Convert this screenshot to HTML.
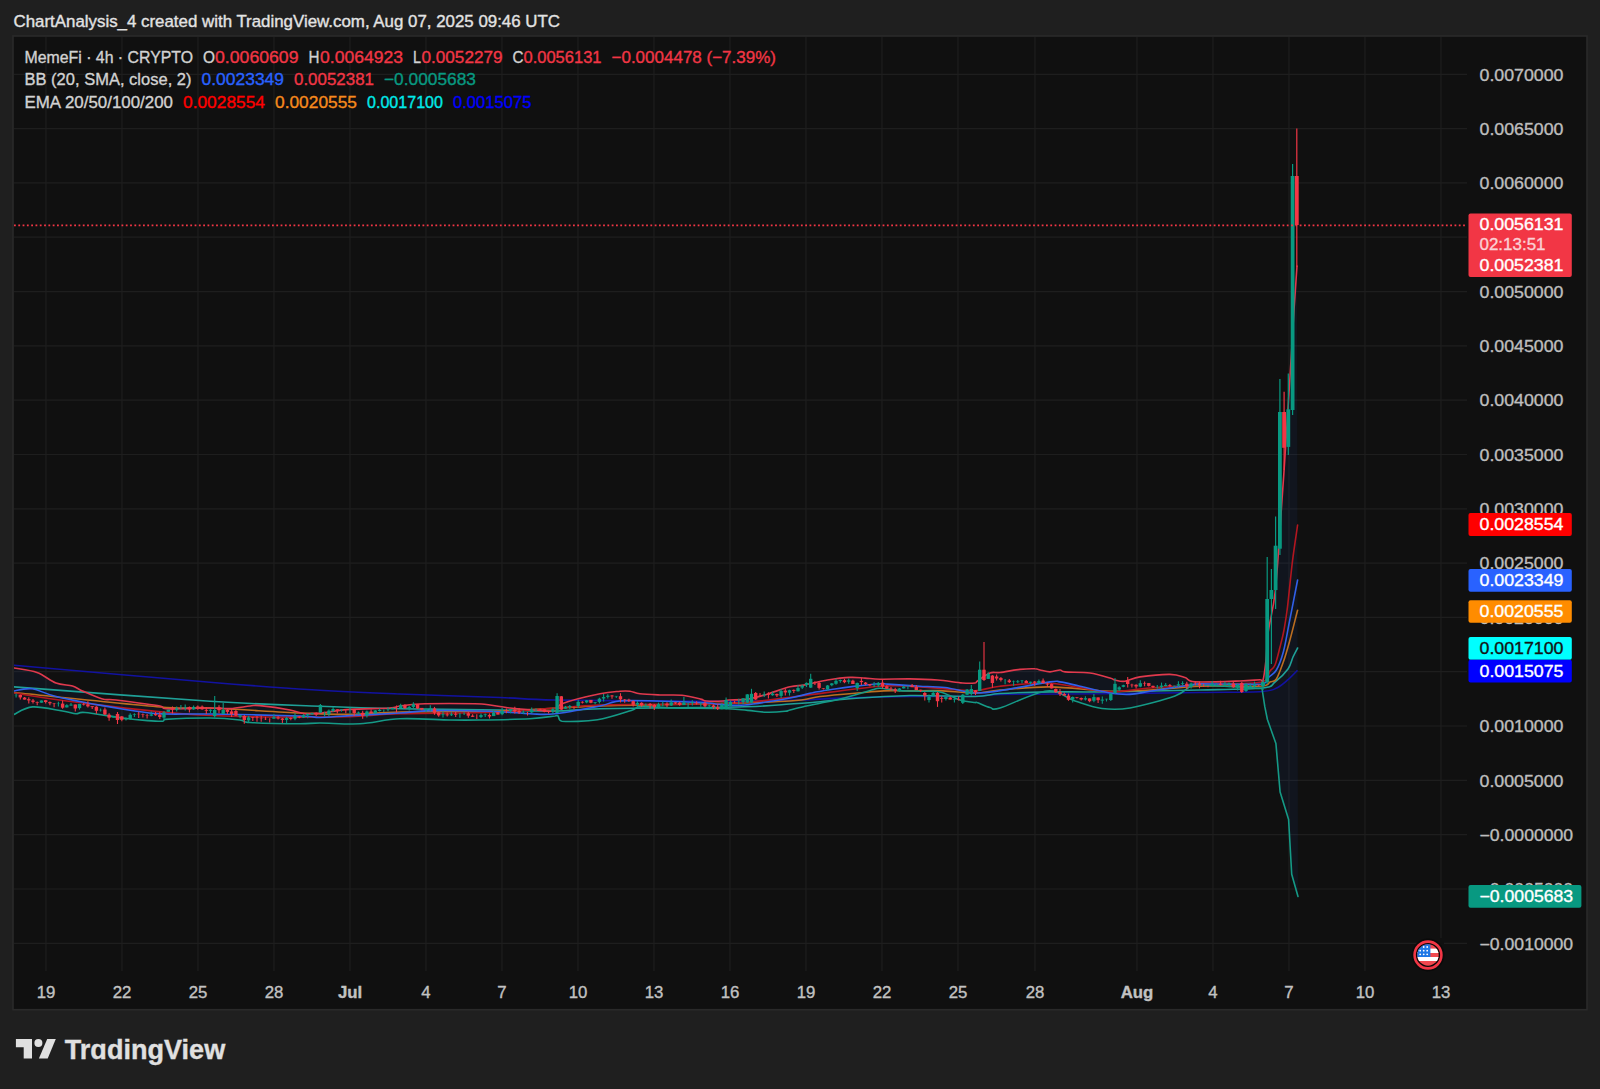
<!DOCTYPE html><html><head><meta charset="utf-8"><style>
html,body{margin:0;padding:0;background:#1f1f1f;width:1600px;height:1089px;overflow:hidden}
svg{display:block;font-family:"Liberation Sans", sans-serif}
</style></head><body>
<svg width="1600" height="1089" viewBox="0 0 1600 1089">
<rect x="0" y="0" width="1600" height="1089" fill="#1f1f1f"/>
<rect x="13" y="36" width="1574" height="973.7" fill="#101010" stroke="#2a2a2a" stroke-width="1.6"/>

<g stroke="#1e1e1e" stroke-width="1.2">
<line x1="46" y1="37" x2="46" y2="971"/>
<line x1="122" y1="37" x2="122" y2="971"/>
<line x1="198" y1="37" x2="198" y2="971"/>
<line x1="274" y1="37" x2="274" y2="971"/>
<line x1="350" y1="37" x2="350" y2="971"/>
<line x1="426" y1="37" x2="426" y2="971"/>
<line x1="502" y1="37" x2="502" y2="971"/>
<line x1="578" y1="37" x2="578" y2="971"/>
<line x1="654" y1="37" x2="654" y2="971"/>
<line x1="730" y1="37" x2="730" y2="971"/>
<line x1="806" y1="37" x2="806" y2="971"/>
<line x1="882" y1="37" x2="882" y2="971"/>
<line x1="958" y1="37" x2="958" y2="971"/>
<line x1="1035" y1="37" x2="1035" y2="971"/>
<line x1="1137" y1="37" x2="1137" y2="971"/>
<line x1="1213" y1="37" x2="1213" y2="971"/>
<line x1="1289" y1="37" x2="1289" y2="971"/>
<line x1="1365" y1="37" x2="1365" y2="971"/>
<line x1="1441" y1="37" x2="1441" y2="971"/>
<line x1="14" y1="74.3" x2="1467" y2="74.3"/>
<line x1="14" y1="128.6" x2="1467" y2="128.6"/>
<line x1="14" y1="182.9" x2="1467" y2="182.9"/>
<line x1="14" y1="237.2" x2="1467" y2="237.2"/>
<line x1="14" y1="291.6" x2="1467" y2="291.6"/>
<line x1="14" y1="345.9" x2="1467" y2="345.9"/>
<line x1="14" y1="400.2" x2="1467" y2="400.2"/>
<line x1="14" y1="454.5" x2="1467" y2="454.5"/>
<line x1="14" y1="508.8" x2="1467" y2="508.8"/>
<line x1="14" y1="563.1" x2="1467" y2="563.1"/>
<line x1="14" y1="617.4" x2="1467" y2="617.4"/>
<line x1="14" y1="671.7" x2="1467" y2="671.7"/>
<line x1="14" y1="726.0" x2="1467" y2="726.0"/>
<line x1="14" y1="780.4" x2="1467" y2="780.4"/>
<line x1="14" y1="834.7" x2="1467" y2="834.7"/>
<line x1="14" y1="889.0" x2="1467" y2="889.0"/>
<line x1="14" y1="943.3" x2="1467" y2="943.3"/>
</g>
<text x="13.5" y="26.6" fill="#e3e3e3" stroke="#e3e3e3" stroke-width="0.35" font-size="16.8" textLength="546.5" lengthAdjust="spacingAndGlyphs">ChartAnalysis_4 created with TradingView.com, Aug 07, 2025 09:46 UTC</text>
<text x="24.5" y="62.7" fill="#d2d2d2" stroke="#d2d2d2" stroke-width="0.35" font-size="16.8" textLength="168.5" lengthAdjust="spacingAndGlyphs">MemeFi · 4h · CRYPTO</text>
<text x="203" y="62.7" fill="#d2d2d2" stroke="#d2d2d2" stroke-width="0.35" font-size="16.8" textLength="12" lengthAdjust="spacingAndGlyphs">O</text>
<text x="215" y="62.7" fill="#f23645" stroke="#f23645" stroke-width="0.35" font-size="16.8" textLength="83.5" lengthAdjust="spacingAndGlyphs">0.0060609</text>
<text x="308.5" y="62.7" fill="#d2d2d2" stroke="#d2d2d2" stroke-width="0.35" font-size="16.8" textLength="11" lengthAdjust="spacingAndGlyphs">H</text>
<text x="320" y="62.7" fill="#f23645" stroke="#f23645" stroke-width="0.35" font-size="16.8" textLength="83" lengthAdjust="spacingAndGlyphs">0.0064923</text>
<text x="413" y="62.7" fill="#d2d2d2" stroke="#d2d2d2" stroke-width="0.35" font-size="16.8" textLength="8" lengthAdjust="spacingAndGlyphs">L</text>
<text x="421.5" y="62.7" fill="#f23645" stroke="#f23645" stroke-width="0.35" font-size="16.8" textLength="81" lengthAdjust="spacingAndGlyphs">0.0052279</text>
<text x="512.5" y="62.7" fill="#d2d2d2" stroke="#d2d2d2" stroke-width="0.35" font-size="16.8" textLength="11" lengthAdjust="spacingAndGlyphs">C</text>
<text x="523.5" y="62.7" fill="#f23645" stroke="#f23645" stroke-width="0.35" font-size="16.8" textLength="78" lengthAdjust="spacingAndGlyphs">0.0056131</text>
<text x="611.5" y="62.7" fill="#f23645" stroke="#f23645" stroke-width="0.35" font-size="16.8" textLength="164.5" lengthAdjust="spacingAndGlyphs">−0.0004478 (−7.39%)</text>
<text x="24.5" y="85.2" fill="#d2d2d2" stroke="#d2d2d2" stroke-width="0.35" font-size="16.8" textLength="167" lengthAdjust="spacingAndGlyphs">BB (20, SMA, close, 2)</text>
<text x="201.5" y="85.2" fill="#2962ff" stroke="#2962ff" stroke-width="0.35" font-size="16.8" textLength="82.5" lengthAdjust="spacingAndGlyphs">0.0023349</text>
<text x="294" y="85.2" fill="#f23645" stroke="#f23645" stroke-width="0.35" font-size="16.8" textLength="80" lengthAdjust="spacingAndGlyphs">0.0052381</text>
<text x="384" y="85.2" fill="#089981" stroke="#089981" stroke-width="0.35" font-size="16.8" textLength="92" lengthAdjust="spacingAndGlyphs">−0.0005683</text>
<text x="24.5" y="107.7" fill="#d2d2d2" stroke="#d2d2d2" stroke-width="0.35" font-size="16.8" textLength="148.5" lengthAdjust="spacingAndGlyphs">EMA 20/50/100/200</text>
<text x="183" y="107.7" fill="#ff0000" stroke="#ff0000" stroke-width="0.35" font-size="16.8" textLength="82" lengthAdjust="spacingAndGlyphs">0.0028554</text>
<text x="275" y="107.7" fill="#f78a1d" stroke="#f78a1d" stroke-width="0.35" font-size="16.8" textLength="82" lengthAdjust="spacingAndGlyphs">0.0020555</text>
<text x="367" y="107.7" fill="#00eaea" stroke="#00eaea" stroke-width="0.35" font-size="16.8" textLength="76" lengthAdjust="spacingAndGlyphs">0.0017100</text>
<text x="453" y="107.7" fill="#0000ff" stroke="#0000ff" stroke-width="0.35" font-size="16.8" textLength="78.5" lengthAdjust="spacingAndGlyphs">0.0015075</text>
<text x="1479.5" y="80.5" fill="#bebebe" stroke="#bebebe" stroke-width="0.35" font-size="16.3" textLength="84" lengthAdjust="spacingAndGlyphs">0.0070000</text>
<text x="1479.5" y="134.8" fill="#bebebe" stroke="#bebebe" stroke-width="0.35" font-size="16.3" textLength="84" lengthAdjust="spacingAndGlyphs">0.0065000</text>
<text x="1479.5" y="189.1" fill="#bebebe" stroke="#bebebe" stroke-width="0.35" font-size="16.3" textLength="84" lengthAdjust="spacingAndGlyphs">0.0060000</text>
<text x="1479.5" y="243.4" fill="#bebebe" stroke="#bebebe" stroke-width="0.35" font-size="16.3" textLength="84" lengthAdjust="spacingAndGlyphs">0.0055000</text>
<text x="1479.5" y="297.8" fill="#bebebe" stroke="#bebebe" stroke-width="0.35" font-size="16.3" textLength="84" lengthAdjust="spacingAndGlyphs">0.0050000</text>
<text x="1479.5" y="352.1" fill="#bebebe" stroke="#bebebe" stroke-width="0.35" font-size="16.3" textLength="84" lengthAdjust="spacingAndGlyphs">0.0045000</text>
<text x="1479.5" y="406.4" fill="#bebebe" stroke="#bebebe" stroke-width="0.35" font-size="16.3" textLength="84" lengthAdjust="spacingAndGlyphs">0.0040000</text>
<text x="1479.5" y="460.7" fill="#bebebe" stroke="#bebebe" stroke-width="0.35" font-size="16.3" textLength="84" lengthAdjust="spacingAndGlyphs">0.0035000</text>
<text x="1479.5" y="515.0" fill="#bebebe" stroke="#bebebe" stroke-width="0.35" font-size="16.3" textLength="84" lengthAdjust="spacingAndGlyphs">0.0030000</text>
<text x="1479.5" y="569.3" fill="#bebebe" stroke="#bebebe" stroke-width="0.35" font-size="16.3" textLength="84" lengthAdjust="spacingAndGlyphs">0.0025000</text>
<text x="1479.5" y="623.6" fill="#bebebe" stroke="#bebebe" stroke-width="0.35" font-size="16.3" textLength="84" lengthAdjust="spacingAndGlyphs">0.0020000</text>
<text x="1479.5" y="677.9" fill="#bebebe" stroke="#bebebe" stroke-width="0.35" font-size="16.3" textLength="84" lengthAdjust="spacingAndGlyphs">0.0015000</text>
<text x="1479.5" y="732.2" fill="#bebebe" stroke="#bebebe" stroke-width="0.35" font-size="16.3" textLength="84" lengthAdjust="spacingAndGlyphs">0.0010000</text>
<text x="1479.5" y="786.6" fill="#bebebe" stroke="#bebebe" stroke-width="0.35" font-size="16.3" textLength="84" lengthAdjust="spacingAndGlyphs">0.0005000</text>
<text x="1479.5" y="840.9" fill="#bebebe" stroke="#bebebe" stroke-width="0.35" font-size="16.3" textLength="93.7" lengthAdjust="spacingAndGlyphs">−0.0000000</text>
<text x="1479.5" y="895.2" fill="#bebebe" stroke="#bebebe" stroke-width="0.35" font-size="16.3" textLength="93.7" lengthAdjust="spacingAndGlyphs">−0.0005000</text>
<text x="1479.5" y="949.5" fill="#bebebe" stroke="#bebebe" stroke-width="0.35" font-size="16.3" textLength="93.7" lengthAdjust="spacingAndGlyphs">−0.0010000</text>
<text x="46" y="998" fill="#c2c2c2" stroke="#c2c2c2" stroke-width="0.35" font-size="16.8" text-anchor="middle">19</text>
<text x="122" y="998" fill="#c2c2c2" stroke="#c2c2c2" stroke-width="0.35" font-size="16.8" text-anchor="middle">22</text>
<text x="198" y="998" fill="#c2c2c2" stroke="#c2c2c2" stroke-width="0.35" font-size="16.8" text-anchor="middle">25</text>
<text x="274" y="998" fill="#c2c2c2" stroke="#c2c2c2" stroke-width="0.35" font-size="16.8" text-anchor="middle">28</text>
<text x="350" y="998" fill="#c2c2c2" stroke="#c2c2c2" stroke-width="0.35" font-size="16.8" font-weight="bold" text-anchor="middle">Jul</text>
<text x="426" y="998" fill="#c2c2c2" stroke="#c2c2c2" stroke-width="0.35" font-size="16.8" text-anchor="middle">4</text>
<text x="502" y="998" fill="#c2c2c2" stroke="#c2c2c2" stroke-width="0.35" font-size="16.8" text-anchor="middle">7</text>
<text x="578" y="998" fill="#c2c2c2" stroke="#c2c2c2" stroke-width="0.35" font-size="16.8" text-anchor="middle">10</text>
<text x="654" y="998" fill="#c2c2c2" stroke="#c2c2c2" stroke-width="0.35" font-size="16.8" text-anchor="middle">13</text>
<text x="730" y="998" fill="#c2c2c2" stroke="#c2c2c2" stroke-width="0.35" font-size="16.8" text-anchor="middle">16</text>
<text x="806" y="998" fill="#c2c2c2" stroke="#c2c2c2" stroke-width="0.35" font-size="16.8" text-anchor="middle">19</text>
<text x="882" y="998" fill="#c2c2c2" stroke="#c2c2c2" stroke-width="0.35" font-size="16.8" text-anchor="middle">22</text>
<text x="958" y="998" fill="#c2c2c2" stroke="#c2c2c2" stroke-width="0.35" font-size="16.8" text-anchor="middle">25</text>
<text x="1035" y="998" fill="#c2c2c2" stroke="#c2c2c2" stroke-width="0.35" font-size="16.8" text-anchor="middle">28</text>
<text x="1137" y="998" fill="#c2c2c2" stroke="#c2c2c2" stroke-width="0.35" font-size="16.8" font-weight="bold" text-anchor="middle">Aug</text>
<text x="1213" y="998" fill="#c2c2c2" stroke="#c2c2c2" stroke-width="0.35" font-size="16.8" text-anchor="middle">4</text>
<text x="1289" y="998" fill="#c2c2c2" stroke="#c2c2c2" stroke-width="0.35" font-size="16.8" text-anchor="middle">7</text>
<text x="1365" y="998" fill="#c2c2c2" stroke="#c2c2c2" stroke-width="0.35" font-size="16.8" text-anchor="middle">10</text>
<text x="1441" y="998" fill="#c2c2c2" stroke="#c2c2c2" stroke-width="0.35" font-size="16.8" text-anchor="middle">13</text>
<defs><clipPath id="pane"><rect x="14" y="37" width="1453" height="934"/></clipPath></defs>
<g clip-path="url(#pane)">
<polygon points="14.0,668.0 37.0,672.5 56.0,683.0 72.5,686.0 82.5,691.0 102.5,699.0 116.0,700.0 160.0,706.0 166.0,708.8 210.0,708.0 230.0,708.5 250.0,706.0 260.0,705.6 290.0,710.0 305.0,713.8 320.0,713.0 350.0,709.4 390.0,708.0 400.0,706.0 425.0,703.8 475.0,703.8 490.0,705.0 510.0,708.0 535.0,710.0 555.0,711.0 562.0,703.8 600.0,693.8 620.0,691.2 630.0,691.2 640.0,693.8 660.0,695.0 682.0,695.3 700.7,699.1 706.3,701.0 723.2,701.0 728.9,700.0 747.6,699.1 766.4,694.4 790.0,686.8 805.0,684.9 827.5,680.0 850.0,677.4 865.0,678.1 880.0,679.2 910.0,678.9 937.5,680.0 962.5,683.0 975.0,683.0 977.5,681.0 990.0,673.0 1000.0,672.5 1020.0,669.4 1035.0,668.8 1040.0,670.0 1050.0,671.9 1060.0,670.0 1065.0,671.9 1090.0,673.0 1110.0,678.0 1115.0,680.0 1125.0,681.2 1140.0,676.9 1170.0,674.4 1185.0,677.5 1195.0,681.9 1240.0,681.0 1260.0,679.7 1263.0,680.3 1266.0,660.0 1268.3,631.5 1275.4,590.0 1282.0,500.0 1285.0,456.0 1290.0,377.0 1294.0,310.0 1297.0,266.0 1298.0,896.5 1291.7,874.3 1288.6,819.4 1280.1,792.0 1275.9,743.4 1267.4,719.5 1264.8,706.7 1262.0,688.5 1200.0,685.0 1191.0,686.0 1175.0,696.0 1130.0,708.0 1102.0,708.5 1075.0,701.0 1047.0,691.0 1000.0,708.0 990.0,707.5 977.0,702.5 975.0,702.5 960.0,700.0 940.0,692.0 920.0,691.2 900.0,690.6 880.0,688.2 872.5,689.8 857.5,694.2 835.0,700.2 820.0,703.2 805.0,706.2 790.0,710.0 785.1,711.3 766.4,712.2 747.6,710.4 723.2,708.5 672.6,707.9 640.7,706.6 631.3,710.4 597.5,719.7 562.0,721.2 558.0,716.0 555.0,716.0 530.0,718.8 480.0,720.0 450.0,720.0 400.0,718.8 360.0,723.8 320.0,723.0 300.0,723.8 250.0,722.5 240.0,720.0 210.0,718.0 165.0,719.4 162.5,721.2 147.5,720.6 122.5,718.0 85.0,712.5 76.0,713.8 62.5,711.0 32.5,706.9 14.0,714.4" fill="#2962ff" fill-opacity="0.06" stroke="none"/>
<path d="M14.0,665.2 C46.7,668.1 160.3,678.2 210.0,682.2 C259.7,686.3 280.3,687.8 312.0,689.8 C343.7,691.7 368.7,692.7 400.0,694.0 C431.3,695.3 474.2,696.5 500.0,697.5 C525.8,698.5 521.7,699.4 555.0,700.0 C588.3,700.6 660.8,701.2 700.0,701.2 C739.2,701.3 767.5,700.7 790.0,700.2 C812.5,699.8 820.0,698.9 835.0,698.4 C850.0,697.9 867.5,697.3 880.0,697.0 C892.5,696.7 894.2,696.6 910.0,696.5 C925.8,696.4 960.0,696.6 975.0,696.2 C990.0,695.9 979.2,694.8 1000.0,694.4 C1020.8,694.0 1066.7,694.1 1100.0,693.8 C1133.3,693.4 1173.0,692.9 1200.0,692.5 C1227.0,692.1 1249.0,692.4 1262.0,691.5 C1275.0,690.6 1273.4,689.4 1277.7,687.4 C1282.0,685.4 1284.8,682.5 1288.0,679.7 C1291.2,676.9 1295.5,672.2 1297.0,670.7" fill="none" stroke="#1212a0" stroke-width="1.6" stroke-linejoin="round" stroke-linecap="round"/>
<path d="M14.0,686.9 C46.7,689.3 159.0,698.0 210.0,701.2 C261.0,704.5 288.3,705.0 320.0,706.2 C351.7,707.5 370.0,708.1 400.0,708.8 C430.0,709.4 474.2,709.6 500.0,710.0 C525.8,710.4 538.3,711.2 555.0,711.0 C571.7,710.8 575.8,709.3 600.0,708.8 C624.2,708.2 673.3,707.9 700.0,707.5 C726.7,707.1 745.0,706.8 760.0,706.2 C775.0,705.7 781.2,704.6 790.0,704.0 C798.8,703.4 802.5,703.4 812.5,702.5 C822.5,701.6 833.8,699.9 850.0,698.8 C866.2,697.6 889.2,695.9 910.0,695.5 C930.8,695.1 960.0,696.8 975.0,696.5 C990.0,696.2 987.5,694.3 1000.0,693.5 C1012.5,692.7 1033.3,692.2 1050.0,691.9 C1066.7,691.6 1075.0,692.2 1100.0,691.9 C1125.0,691.6 1173.0,690.6 1200.0,690.0 C1227.0,689.4 1249.5,689.3 1262.0,688.0 C1274.5,686.7 1270.7,685.2 1275.0,682.0 C1279.3,678.8 1285.0,673.2 1288.0,669.0 C1291.0,664.8 1291.4,660.5 1293.0,657.0 C1294.6,653.5 1296.8,649.5 1297.6,648.0" fill="none" stroke="#1fa097" stroke-width="1.6" stroke-linejoin="round" stroke-linecap="round"/>
<path d="M14.0,692.5 C38.3,694.9 127.3,704.4 160.0,707.0 C192.7,709.6 186.7,707.0 210.0,708.0 C233.3,709.0 276.7,711.9 300.0,713.0 C323.3,714.1 333.3,714.6 350.0,714.4 C366.7,714.2 375.0,712.6 400.0,712.0 C425.0,711.4 466.7,712.0 500.0,711.0 C533.3,710.0 566.7,707.2 600.0,706.0 C633.3,704.8 668.3,704.8 700.0,704.0 C731.7,703.2 770.0,702.2 790.0,701.0 C810.0,699.8 808.8,697.8 820.0,696.5 C831.2,695.2 846.9,693.9 857.5,693.0 C868.1,692.1 875.0,691.2 883.8,690.9 C892.5,690.5 900.6,690.9 910.0,690.9 C919.4,690.9 929.2,690.2 940.0,690.6 C950.8,691.0 965.0,693.1 975.0,693.0 C985.0,692.9 987.5,691.0 1000.0,690.0 C1012.5,689.0 1031.7,686.7 1050.0,686.9 C1068.3,687.1 1093.3,690.7 1110.0,691.2 C1126.7,691.8 1135.0,690.8 1150.0,690.0 C1165.0,689.2 1181.3,686.9 1200.0,686.2 C1218.7,685.6 1250.3,686.7 1262.0,686.0 C1270.0,685.3 1267.6,683.2 1270.0,682.0 C1272.4,680.8 1274.2,682.4 1276.4,679.0 C1278.6,675.6 1281.2,668.0 1283.4,661.8 C1285.6,655.6 1287.1,650.2 1289.5,641.6 C1291.9,633.0 1296.2,615.5 1297.6,610.3" fill="none" stroke="#bc6e20" stroke-width="1.6" stroke-linejoin="round" stroke-linecap="round"/>
<path d="M14.0,693.0 C24.8,694.6 47.8,698.8 78.8,702.5 C109.8,706.2 158.1,712.6 200.0,715.0 C241.9,717.4 296.7,717.2 330.0,717.0 C363.3,716.8 371.7,714.6 400.0,713.8 C428.3,712.9 466.7,713.5 500.0,712.0 C533.3,710.5 566.7,706.3 600.0,705.0 C633.3,703.7 675.0,704.5 700.0,704.0 C725.0,703.5 733.3,703.3 750.0,702.0 C766.7,700.7 778.3,698.6 800.0,696.0 C821.7,693.4 860.0,687.8 880.0,686.2 C900.0,684.7 906.7,686.3 920.0,686.9 C933.3,687.5 950.5,689.4 960.0,690.0 C969.5,690.6 970.3,691.2 977.0,690.6 C983.7,690.0 988.7,687.5 1000.0,686.2 C1011.3,685.0 1031.7,682.8 1045.0,683.0 C1058.3,683.2 1069.2,686.0 1080.0,687.5 C1090.8,689.0 1098.3,691.8 1110.0,691.9 C1121.7,692.0 1135.0,689.1 1150.0,688.0 C1165.0,686.9 1181.3,686.0 1200.0,685.0 C1218.7,684.0 1250.3,684.3 1262.0,682.0 C1270.0,679.7 1267.8,673.8 1270.0,671.0 C1272.2,668.2 1273.3,669.0 1275.0,665.0 C1276.7,661.0 1278.5,652.8 1280.0,647.0 C1281.5,641.2 1282.8,636.7 1284.0,630.0 C1285.2,623.3 1286.1,618.5 1287.5,607.0 C1288.9,595.5 1290.8,574.7 1292.5,561.0 C1294.2,547.3 1296.8,531.0 1297.6,525.0" fill="none" stroke="#b3161f" stroke-width="1.6" stroke-linejoin="round" stroke-linecap="round"/>
<path d="M14.0,714.4 C17.1,713.1 24.4,707.5 32.5,706.9 C40.6,706.3 55.2,709.9 62.5,711.0 C69.8,712.1 72.2,713.5 76.0,713.8 C79.8,714.0 77.2,711.8 85.0,712.5 C92.8,713.2 112.1,716.6 122.5,718.0 C132.9,719.4 140.8,720.1 147.5,720.6 C154.2,721.1 159.6,721.5 162.5,721.2 C165.0,721.0 162.5,719.9 165.0,719.4 C172.9,718.9 197.5,717.9 210.0,718.0 C222.5,718.1 233.3,719.2 240.0,720.0 C246.7,720.8 240.0,721.9 250.0,722.5 C260.0,723.1 288.3,723.7 300.0,723.8 C311.7,723.8 310.0,723.0 320.0,723.0 C330.0,723.0 346.7,724.5 360.0,723.8 C373.3,723.0 385.0,719.4 400.0,718.8 C415.0,718.1 436.7,719.8 450.0,720.0 C463.3,720.2 466.7,720.2 480.0,720.0 C493.3,719.8 517.5,719.4 530.0,718.8 C542.5,718.1 550.3,716.5 555.0,716.0 C558.0,715.5 556.8,715.1 558.0,716.0 C559.2,716.9 558.0,720.6 562.0,721.2 C568.6,721.9 586.0,721.5 597.5,719.7 C609.0,717.9 624.1,712.6 631.3,710.4 C638.5,708.2 633.8,707.0 640.7,706.6 C647.6,706.2 658.9,707.6 672.6,707.9 C686.4,708.2 710.7,708.1 723.2,708.5 C735.7,708.9 740.4,709.8 747.6,710.4 C754.8,711.0 760.1,712.1 766.4,712.2 C772.6,712.4 781.2,711.7 785.1,711.3 C789.0,710.9 786.7,710.8 790.0,710.0 C793.3,709.2 800.0,707.4 805.0,706.2 C810.0,705.1 815.0,704.2 820.0,703.2 C825.0,702.2 828.8,701.8 835.0,700.2 C841.2,698.8 851.2,696.0 857.5,694.2 C863.8,692.5 868.8,690.8 872.5,689.8 C876.2,688.8 875.4,688.1 880.0,688.2 C884.6,688.4 893.3,690.1 900.0,690.6 C906.7,691.1 913.3,691.0 920.0,691.2 C926.7,691.5 933.3,690.5 940.0,692.0 C946.7,693.5 954.2,698.2 960.0,700.0 C965.8,701.8 972.2,702.1 975.0,702.5 C977.0,702.9 975.0,701.7 977.0,702.5 C979.5,703.3 986.2,706.6 990.0,707.5 C993.8,708.4 990.5,710.8 1000.0,708.0 C1009.5,705.2 1034.5,692.2 1047.0,691.0 C1059.5,689.8 1065.8,698.1 1075.0,701.0 C1084.2,703.9 1092.8,707.3 1102.0,708.5 C1111.2,709.7 1117.8,710.1 1130.0,708.0 C1142.2,705.9 1164.8,699.7 1175.0,696.0 C1185.2,692.3 1186.8,687.8 1191.0,686.0 C1195.2,684.2 1191.0,684.6 1200.0,685.0 C1211.8,685.4 1251.7,687.9 1262.0,688.5 L1264.8,706.7 L1267.4,719.5 L1275.9,743.4 L1280.1,792.0 L1288.6,819.4 L1291.7,874.3 L1298.0,896.5" fill="none" stroke="#159a86" stroke-width="1.6" stroke-linejoin="round" stroke-linecap="round"/>
<path d="M14.0,691.0 C17.1,690.6 24.8,687.7 32.5,688.8 C40.2,689.8 42.9,693.8 60.0,697.5 C77.1,701.2 117.3,708.2 135.0,711.0 C152.7,713.8 153.5,713.5 166.0,714.0 C178.5,714.5 187.7,713.7 210.0,714.0 C232.3,714.3 281.7,715.4 300.0,716.0 C318.3,716.6 311.7,717.6 320.0,717.5 C328.3,717.4 336.7,716.4 350.0,715.6 C363.3,714.9 386.7,713.8 400.0,713.0 C413.3,712.2 415.0,710.9 430.0,710.6 C445.0,710.3 473.3,710.7 490.0,711.2 C506.7,711.8 519.2,713.3 530.0,713.8 C540.8,714.2 543.3,715.0 555.0,713.8 C566.7,712.5 588.3,708.2 600.0,706.0 C611.7,703.8 608.3,701.2 625.0,700.6 C641.7,700.0 684.2,701.9 700.0,702.5 C715.8,703.1 712.5,704.0 720.0,704.4 C727.5,704.8 733.3,706.1 745.0,705.0 C756.7,703.9 778.8,700.0 790.0,698.0 C801.2,696.0 805.0,694.2 812.5,692.8 C820.0,691.2 828.1,690.1 835.0,689.0 C841.9,687.9 846.2,687.3 853.8,686.4 C861.2,685.5 874.4,684.1 880.0,683.8 C885.6,683.4 882.5,683.8 887.5,684.1 C892.5,684.4 904.6,685.2 910.0,685.6 C915.4,686.0 914.2,685.9 920.0,686.2 C925.8,686.6 935.8,686.4 945.0,687.5 C954.2,688.6 965.8,692.5 975.0,693.0 C984.2,693.5 987.5,692.5 1000.0,690.6 C1012.5,688.8 1040.0,683.4 1050.0,681.9 C1060.0,680.4 1055.0,681.2 1060.0,681.9 C1065.0,682.6 1071.7,684.4 1080.0,686.2 C1088.3,688.1 1101.7,691.6 1110.0,693.0 C1118.3,694.4 1123.3,694.7 1130.0,694.4 C1136.7,694.1 1140.0,692.8 1150.0,691.2 C1160.0,689.7 1181.7,686.2 1190.0,685.0 C1198.3,683.8 1190.0,683.9 1200.0,683.8 C1212.0,683.6 1250.5,685.1 1262.0,684.0 C1269.0,682.9 1266.6,679.3 1269.0,677.0 C1271.4,674.7 1274.0,674.2 1276.4,670.0 C1278.8,665.8 1281.2,659.8 1283.4,651.7 C1285.6,643.6 1287.1,633.4 1289.5,621.4 C1291.9,609.4 1296.2,586.9 1297.6,580.0" fill="none" stroke="#3160ea" stroke-width="1.6" stroke-linejoin="round" stroke-linecap="round"/>
<path d="M14.0,668.0 C17.8,668.8 30.0,670.0 37.0,672.5 C44.0,675.0 50.1,680.8 56.0,683.0 C61.9,685.2 68.1,684.7 72.5,686.0 C76.9,687.3 77.5,688.8 82.5,691.0 C87.5,693.2 96.9,697.5 102.5,699.0 C108.1,700.5 106.4,698.8 116.0,700.0 C125.6,701.2 151.7,704.5 160.0,706.0 C166.0,707.5 160.0,708.4 166.0,708.8 C174.3,709.1 199.3,708.0 210.0,708.0 C220.7,708.0 223.3,708.8 230.0,708.5 C236.7,708.2 245.0,706.5 250.0,706.0 C255.0,705.5 253.3,704.9 260.0,705.6 C266.7,706.3 282.5,708.6 290.0,710.0 C297.5,711.4 300.0,713.2 305.0,713.8 C310.0,714.2 312.5,713.7 320.0,713.0 C327.5,712.3 338.3,710.2 350.0,709.4 C361.7,708.6 381.7,708.6 390.0,708.0 C398.3,707.4 394.2,706.7 400.0,706.0 C405.8,705.3 412.5,704.1 425.0,703.8 C437.5,703.4 464.2,703.5 475.0,703.8 C485.8,704.0 484.2,704.3 490.0,705.0 C495.8,705.7 502.5,707.2 510.0,708.0 C517.5,708.8 527.5,709.5 535.0,710.0 C542.5,710.5 550.5,712.0 555.0,711.0 C559.5,710.0 555.0,706.6 562.0,703.8 C569.5,700.9 590.3,695.8 600.0,693.8 C609.7,691.7 615.0,691.7 620.0,691.2 C625.0,690.8 626.7,690.8 630.0,691.2 C633.3,691.7 635.0,693.1 640.0,693.8 C645.0,694.4 653.0,694.7 660.0,695.0 C667.0,695.3 675.2,694.6 682.0,695.3 C688.8,696.0 696.7,698.1 700.7,699.1 C704.8,700.1 702.5,700.7 706.3,701.0 C710.0,701.3 719.4,701.2 723.2,701.0 C727.0,700.8 724.8,700.3 728.9,700.0 C733.0,699.7 741.4,700.0 747.6,699.1 C753.9,698.2 759.3,696.5 766.4,694.4 C773.5,692.3 783.6,688.3 790.0,686.8 C796.4,685.2 798.8,686.0 805.0,684.9 C811.2,683.8 820.0,681.2 827.5,680.0 C835.0,678.8 843.8,677.7 850.0,677.4 C856.2,677.1 860.0,677.8 865.0,678.1 C870.0,678.4 872.5,679.1 880.0,679.2 C887.5,679.4 900.4,678.8 910.0,678.9 C919.6,679.0 928.8,679.3 937.5,680.0 C946.2,680.7 956.2,682.5 962.5,683.0 C968.8,683.5 972.5,683.3 975.0,683.0 C977.5,682.7 975.0,682.7 977.5,681.0 C980.0,679.3 986.2,674.4 990.0,673.0 C993.8,671.6 995.0,673.1 1000.0,672.5 C1005.0,671.9 1014.2,670.0 1020.0,669.4 C1025.8,668.8 1031.7,668.6 1035.0,668.8 C1038.3,668.9 1037.5,669.5 1040.0,670.0 C1042.5,670.5 1046.7,671.9 1050.0,671.9 C1053.3,671.9 1057.5,670.0 1060.0,670.0 C1062.5,670.0 1060.0,671.4 1065.0,671.9 C1070.0,672.4 1082.5,672.0 1090.0,673.0 C1097.5,674.0 1105.8,676.8 1110.0,678.0 C1114.2,679.2 1112.5,679.5 1115.0,680.0 C1117.5,680.5 1120.8,681.8 1125.0,681.2 C1129.2,680.7 1132.5,678.0 1140.0,676.9 C1147.5,675.8 1162.5,674.3 1170.0,674.4 C1177.5,674.5 1180.8,676.2 1185.0,677.5 C1189.2,678.8 1185.8,681.3 1195.0,681.9 C1204.2,682.5 1229.2,681.4 1240.0,681.0 C1250.8,680.6 1256.2,679.8 1260.0,679.7 C1263.0,679.6 1262.0,683.6 1263.0,680.3 C1264.0,677.0 1265.1,668.1 1266.0,660.0 C1266.9,651.9 1266.7,643.2 1268.3,631.5 C1269.9,619.8 1273.1,611.9 1275.4,590.0 C1277.7,568.1 1280.4,522.3 1282.0,500.0 C1283.6,477.7 1283.7,476.5 1285.0,456.0 C1286.3,435.5 1288.5,401.3 1290.0,377.0 C1291.5,352.7 1292.8,328.5 1294.0,310.0 C1295.2,291.5 1296.5,273.3 1297.0,266.0" fill="none" stroke="#e0394d" stroke-width="1.6" stroke-linejoin="round" stroke-linecap="round"/>
<line x1="16.1" y1="693.4" x2="16.1" y2="697.6" stroke="#089981" stroke-width="1.1"/>
<rect x="14.4" y="694.9" width="3.4" height="0.3" fill="#089981"/>
<line x1="20.3" y1="694.5" x2="20.3" y2="699.5" stroke="#f23645" stroke-width="1.1"/>
<rect x="18.6" y="695.0" width="3.4" height="2.4" fill="#f23645"/>
<line x1="24.6" y1="697.1" x2="24.6" y2="699.6" stroke="#f23645" stroke-width="1.1"/>
<rect x="22.9" y="697.6" width="3.4" height="2.0" fill="#f23645"/>
<line x1="28.8" y1="697.2" x2="28.8" y2="703.4" stroke="#f23645" stroke-width="1.1"/>
<rect x="27.1" y="699.2" width="3.4" height="1.2" fill="#f23645"/>
<line x1="33.0" y1="699.0" x2="33.0" y2="703.4" stroke="#f23645" stroke-width="1.1"/>
<rect x="31.3" y="700.5" width="3.4" height="1.4" fill="#f23645"/>
<line x1="37.2" y1="701.5" x2="37.2" y2="705.2" stroke="#f23645" stroke-width="1.1"/>
<rect x="35.5" y="702.0" width="3.4" height="0.6" fill="#f23645"/>
<line x1="41.5" y1="700.5" x2="41.5" y2="702.7" stroke="#089981" stroke-width="1.1"/>
<rect x="39.8" y="700.5" width="3.4" height="2.2" fill="#089981"/>
<line x1="45.7" y1="700.2" x2="45.7" y2="703.4" stroke="#f23645" stroke-width="1.1"/>
<rect x="44.0" y="700.2" width="3.4" height="1.8" fill="#f23645"/>
<line x1="49.9" y1="701.6" x2="49.9" y2="705.3" stroke="#f23645" stroke-width="1.1"/>
<rect x="48.2" y="702.1" width="3.4" height="1.2" fill="#f23645"/>
<line x1="54.1" y1="703.0" x2="54.1" y2="707.2" stroke="#f23645" stroke-width="1.1"/>
<rect x="52.4" y="703.0" width="3.4" height="0.4" fill="#f23645"/>
<line x1="58.4" y1="701.7" x2="58.4" y2="706.4" stroke="#089981" stroke-width="1.1"/>
<rect x="56.7" y="703.2" width="3.4" height="0.3" fill="#089981"/>
<line x1="62.6" y1="700.6" x2="62.6" y2="708.7" stroke="#f23645" stroke-width="1.1"/>
<rect x="60.9" y="703.6" width="3.4" height="4.1" fill="#f23645"/>
<line x1="66.8" y1="704.2" x2="66.8" y2="707.4" stroke="#089981" stroke-width="1.1"/>
<rect x="65.1" y="705.2" width="3.4" height="2.2" fill="#089981"/>
<line x1="71.0" y1="703.1" x2="71.0" y2="705.8" stroke="#089981" stroke-width="1.1"/>
<rect x="69.3" y="704.6" width="3.4" height="0.9" fill="#089981"/>
<line x1="75.3" y1="704.5" x2="75.3" y2="711.5" stroke="#f23645" stroke-width="1.1"/>
<rect x="73.6" y="704.5" width="3.4" height="4.0" fill="#f23645"/>
<line x1="79.5" y1="703.9" x2="79.5" y2="709.6" stroke="#089981" stroke-width="1.1"/>
<rect x="77.8" y="703.9" width="3.4" height="4.2" fill="#089981"/>
<line x1="83.7" y1="702.7" x2="83.7" y2="705.4" stroke="#f23645" stroke-width="1.1"/>
<rect x="82.0" y="704.2" width="3.4" height="0.6" fill="#f23645"/>
<line x1="87.9" y1="701.3" x2="87.9" y2="707.5" stroke="#f23645" stroke-width="1.1"/>
<rect x="86.2" y="704.3" width="3.4" height="2.1" fill="#f23645"/>
<line x1="92.2" y1="706.2" x2="92.2" y2="708.9" stroke="#f23645" stroke-width="1.1"/>
<rect x="90.5" y="706.2" width="3.4" height="0.9" fill="#f23645"/>
<line x1="96.4" y1="706.2" x2="96.4" y2="713.8" stroke="#f23645" stroke-width="1.1"/>
<rect x="94.7" y="706.7" width="3.4" height="4.1" fill="#f23645"/>
<line x1="100.6" y1="708.4" x2="100.6" y2="711.6" stroke="#089981" stroke-width="1.1"/>
<rect x="98.9" y="709.9" width="3.4" height="0.4" fill="#089981"/>
<line x1="104.9" y1="707.5" x2="104.9" y2="714.9" stroke="#f23645" stroke-width="1.1"/>
<rect x="103.2" y="709.5" width="3.4" height="4.9" fill="#f23645"/>
<line x1="109.1" y1="713.2" x2="109.1" y2="720.7" stroke="#f23645" stroke-width="1.1"/>
<rect x="107.4" y="714.7" width="3.4" height="3.0" fill="#f23645"/>
<line x1="113.3" y1="715.9" x2="113.3" y2="717.6" stroke="#089981" stroke-width="1.1"/>
<rect x="111.6" y="716.4" width="3.4" height="1.1" fill="#089981"/>
<line x1="117.5" y1="712.0" x2="117.5" y2="724.0" stroke="#f23645" stroke-width="1.1"/>
<rect x="115.8" y="714.0" width="3.4" height="6.0" fill="#f23645"/>
<line x1="121.8" y1="715.9" x2="121.8" y2="721.3" stroke="#f23645" stroke-width="1.1"/>
<rect x="120.1" y="716.4" width="3.4" height="3.4" fill="#f23645"/>
<line x1="126.0" y1="717.4" x2="126.0" y2="720.6" stroke="#089981" stroke-width="1.1"/>
<rect x="124.3" y="719.4" width="3.4" height="0.5" fill="#089981"/>
<line x1="130.2" y1="713.3" x2="130.2" y2="720.0" stroke="#089981" stroke-width="1.1"/>
<rect x="128.5" y="714.8" width="3.4" height="4.1" fill="#089981"/>
<line x1="134.4" y1="713.3" x2="134.4" y2="717.0" stroke="#089981" stroke-width="1.1"/>
<rect x="132.7" y="714.3" width="3.4" height="0.6" fill="#089981"/>
<line x1="138.7" y1="711.8" x2="138.7" y2="718.0" stroke="#f23645" stroke-width="1.1"/>
<rect x="137.0" y="713.8" width="3.4" height="0.4" fill="#f23645"/>
<line x1="142.9" y1="713.4" x2="142.9" y2="717.6" stroke="#f23645" stroke-width="1.1"/>
<rect x="141.2" y="714.4" width="3.4" height="0.5" fill="#f23645"/>
<line x1="147.1" y1="713.9" x2="147.1" y2="718.6" stroke="#f23645" stroke-width="1.1"/>
<rect x="145.4" y="715.4" width="3.4" height="0.4" fill="#f23645"/>
<line x1="151.3" y1="711.4" x2="151.3" y2="716.2" stroke="#089981" stroke-width="1.1"/>
<rect x="149.6" y="714.4" width="3.4" height="1.3" fill="#089981"/>
<line x1="155.6" y1="712.1" x2="155.6" y2="715.8" stroke="#f23645" stroke-width="1.1"/>
<rect x="153.9" y="714.1" width="3.4" height="1.1" fill="#f23645"/>
<line x1="159.8" y1="711.8" x2="159.8" y2="719.0" stroke="#f23645" stroke-width="1.1"/>
<rect x="158.1" y="714.8" width="3.4" height="2.2" fill="#f23645"/>
<line x1="164.0" y1="710.9" x2="164.0" y2="719.5" stroke="#089981" stroke-width="1.1"/>
<rect x="162.3" y="712.4" width="3.4" height="5.2" fill="#089981"/>
<line x1="168.3" y1="709.7" x2="168.3" y2="711.8" stroke="#089981" stroke-width="1.1"/>
<rect x="166.6" y="709.7" width="3.4" height="2.1" fill="#089981"/>
<line x1="172.5" y1="706.4" x2="172.5" y2="713.6" stroke="#f23645" stroke-width="1.1"/>
<rect x="170.8" y="709.4" width="3.4" height="0.6" fill="#f23645"/>
<line x1="176.7" y1="706.5" x2="176.7" y2="711.4" stroke="#089981" stroke-width="1.1"/>
<rect x="175.0" y="708.5" width="3.4" height="1.4" fill="#089981"/>
<line x1="180.9" y1="705.1" x2="180.9" y2="709.3" stroke="#089981" stroke-width="1.1"/>
<rect x="179.2" y="708.1" width="3.4" height="0.0" fill="#089981"/>
<line x1="185.2" y1="704.4" x2="185.2" y2="710.6" stroke="#089981" stroke-width="1.1"/>
<rect x="183.5" y="707.4" width="3.4" height="0.7" fill="#089981"/>
<line x1="189.4" y1="706.6" x2="189.4" y2="712.5" stroke="#f23645" stroke-width="1.1"/>
<rect x="187.7" y="707.1" width="3.4" height="2.4" fill="#f23645"/>
<line x1="193.6" y1="705.4" x2="193.6" y2="709.7" stroke="#089981" stroke-width="1.1"/>
<rect x="191.9" y="706.9" width="3.4" height="2.4" fill="#089981"/>
<line x1="197.8" y1="705.5" x2="197.8" y2="709.7" stroke="#f23645" stroke-width="1.1"/>
<rect x="196.1" y="706.5" width="3.4" height="0.6" fill="#f23645"/>
<line x1="202.1" y1="705.6" x2="202.1" y2="709.8" stroke="#f23645" stroke-width="1.1"/>
<rect x="200.4" y="706.6" width="3.4" height="2.7" fill="#f23645"/>
<line x1="206.3" y1="706.9" x2="206.3" y2="714.1" stroke="#f23645" stroke-width="1.1"/>
<rect x="204.6" y="709.9" width="3.4" height="0.8" fill="#f23645"/>
<line x1="210.5" y1="709.3" x2="210.5" y2="713.0" stroke="#089981" stroke-width="1.1"/>
<rect x="208.8" y="709.8" width="3.4" height="1.0" fill="#089981"/>
<line x1="214.7" y1="696.0" x2="214.7" y2="717.5" stroke="#089981" stroke-width="1.1"/>
<rect x="213.0" y="710.0" width="3.4" height="6.0" fill="#089981"/>
<line x1="219.0" y1="705.2" x2="219.0" y2="713.3" stroke="#f23645" stroke-width="1.1"/>
<rect x="217.3" y="707.2" width="3.4" height="3.0" fill="#f23645"/>
<line x1="223.2" y1="703.0" x2="223.2" y2="714.0" stroke="#089981" stroke-width="1.1"/>
<rect x="221.5" y="710.0" width="3.4" height="4.0" fill="#089981"/>
<line x1="227.4" y1="708.4" x2="227.4" y2="713.9" stroke="#f23645" stroke-width="1.1"/>
<rect x="225.7" y="709.9" width="3.4" height="2.0" fill="#f23645"/>
<line x1="231.6" y1="708.4" x2="231.6" y2="717.1" stroke="#f23645" stroke-width="1.1"/>
<rect x="229.9" y="711.4" width="3.4" height="2.7" fill="#f23645"/>
<line x1="235.9" y1="710.0" x2="235.9" y2="716.0" stroke="#f23645" stroke-width="1.1"/>
<rect x="234.2" y="711.0" width="3.4" height="4.6" fill="#f23645"/>
<line x1="240.1" y1="715.2" x2="240.1" y2="718.2" stroke="#089981" stroke-width="1.1"/>
<rect x="238.4" y="715.2" width="3.4" height="1.5" fill="#089981"/>
<line x1="244.3" y1="715.0" x2="244.3" y2="723.8" stroke="#f23645" stroke-width="1.1"/>
<rect x="242.6" y="716.0" width="3.4" height="4.0" fill="#f23645"/>
<line x1="248.6" y1="715.9" x2="248.6" y2="722.4" stroke="#089981" stroke-width="1.1"/>
<rect x="246.9" y="717.4" width="3.4" height="3.0" fill="#089981"/>
<line x1="252.8" y1="716.9" x2="252.8" y2="721.1" stroke="#f23645" stroke-width="1.1"/>
<rect x="251.1" y="716.9" width="3.4" height="0.8" fill="#f23645"/>
<line x1="257.0" y1="716.0" x2="257.0" y2="721.7" stroke="#f23645" stroke-width="1.1"/>
<rect x="255.3" y="717.5" width="3.4" height="0.6" fill="#f23645"/>
<line x1="261.2" y1="715.5" x2="261.2" y2="721.7" stroke="#f23645" stroke-width="1.1"/>
<rect x="259.5" y="718.5" width="3.4" height="0.3" fill="#f23645"/>
<line x1="265.5" y1="716.8" x2="265.5" y2="720.0" stroke="#f23645" stroke-width="1.1"/>
<rect x="263.8" y="718.8" width="3.4" height="0.4" fill="#f23645"/>
<line x1="269.7" y1="718.2" x2="269.7" y2="722.4" stroke="#f23645" stroke-width="1.1"/>
<rect x="268.0" y="719.2" width="3.4" height="0.1" fill="#f23645"/>
<line x1="273.9" y1="714.2" x2="273.9" y2="718.7" stroke="#089981" stroke-width="1.1"/>
<rect x="272.2" y="717.2" width="3.4" height="1.5" fill="#089981"/>
<line x1="278.1" y1="715.9" x2="278.1" y2="719.6" stroke="#f23645" stroke-width="1.1"/>
<rect x="276.4" y="717.4" width="3.4" height="1.2" fill="#f23645"/>
<line x1="282.4" y1="718.0" x2="282.4" y2="722.9" stroke="#f23645" stroke-width="1.1"/>
<rect x="280.7" y="718.5" width="3.4" height="1.4" fill="#f23645"/>
<line x1="286.6" y1="717.1" x2="286.6" y2="722.9" stroke="#089981" stroke-width="1.1"/>
<rect x="284.9" y="718.1" width="3.4" height="1.8" fill="#089981"/>
<line x1="290.8" y1="717.6" x2="290.8" y2="720.3" stroke="#f23645" stroke-width="1.1"/>
<rect x="289.1" y="718.1" width="3.4" height="0.9" fill="#f23645"/>
<line x1="295.0" y1="713.2" x2="295.0" y2="720.2" stroke="#089981" stroke-width="1.1"/>
<rect x="293.3" y="716.2" width="3.4" height="2.5" fill="#089981"/>
<line x1="299.3" y1="716.0" x2="299.3" y2="718.2" stroke="#f23645" stroke-width="1.1"/>
<rect x="297.6" y="716.5" width="3.4" height="0.9" fill="#f23645"/>
<line x1="303.5" y1="714.2" x2="303.5" y2="718.0" stroke="#089981" stroke-width="1.1"/>
<rect x="301.8" y="715.2" width="3.4" height="2.3" fill="#089981"/>
<line x1="307.7" y1="713.8" x2="307.7" y2="718.2" stroke="#089981" stroke-width="1.1"/>
<rect x="306.0" y="713.8" width="3.4" height="1.4" fill="#089981"/>
<line x1="312.0" y1="712.7" x2="312.0" y2="714.4" stroke="#089981" stroke-width="1.1"/>
<rect x="310.3" y="713.2" width="3.4" height="1.2" fill="#089981"/>
<line x1="316.2" y1="712.4" x2="316.2" y2="716.1" stroke="#f23645" stroke-width="1.1"/>
<rect x="314.5" y="712.9" width="3.4" height="1.7" fill="#f23645"/>
<line x1="320.4" y1="704.0" x2="320.4" y2="713.0" stroke="#089981" stroke-width="1.1"/>
<rect x="318.7" y="705.0" width="3.4" height="7.5" fill="#089981"/>
<line x1="324.6" y1="711.8" x2="324.6" y2="716.5" stroke="#089981" stroke-width="1.1"/>
<rect x="322.9" y="713.8" width="3.4" height="0.4" fill="#089981"/>
<line x1="328.9" y1="709.6" x2="328.9" y2="716.2" stroke="#089981" stroke-width="1.1"/>
<rect x="327.2" y="710.6" width="3.4" height="3.6" fill="#089981"/>
<line x1="333.1" y1="707.0" x2="333.1" y2="711.9" stroke="#089981" stroke-width="1.1"/>
<rect x="331.4" y="709.0" width="3.4" height="1.9" fill="#089981"/>
<line x1="337.3" y1="709.3" x2="337.3" y2="713.5" stroke="#f23645" stroke-width="1.1"/>
<rect x="335.6" y="709.3" width="3.4" height="0.8" fill="#f23645"/>
<line x1="341.5" y1="709.4" x2="341.5" y2="711.6" stroke="#089981" stroke-width="1.1"/>
<rect x="339.8" y="709.4" width="3.4" height="0.7" fill="#089981"/>
<line x1="345.8" y1="709.0" x2="345.8" y2="713.2" stroke="#f23645" stroke-width="1.1"/>
<rect x="344.1" y="709.0" width="3.4" height="0.9" fill="#f23645"/>
<line x1="350.0" y1="707.3" x2="350.0" y2="713.5" stroke="#089981" stroke-width="1.1"/>
<rect x="348.3" y="709.3" width="3.4" height="0.1" fill="#089981"/>
<line x1="354.2" y1="709.1" x2="354.2" y2="716.0" stroke="#f23645" stroke-width="1.1"/>
<rect x="352.5" y="709.1" width="3.4" height="3.9" fill="#f23645"/>
<line x1="358.4" y1="711.5" x2="358.4" y2="714.2" stroke="#089981" stroke-width="1.1"/>
<rect x="356.7" y="712.5" width="3.4" height="0.9" fill="#089981"/>
<line x1="362.7" y1="710.8" x2="362.7" y2="718.7" stroke="#f23645" stroke-width="1.1"/>
<rect x="361.0" y="712.8" width="3.4" height="2.9" fill="#f23645"/>
<line x1="366.9" y1="710.5" x2="366.9" y2="717.4" stroke="#089981" stroke-width="1.1"/>
<rect x="365.2" y="711.5" width="3.4" height="4.0" fill="#089981"/>
<line x1="371.1" y1="709.5" x2="371.1" y2="713.6" stroke="#f23645" stroke-width="1.1"/>
<rect x="369.4" y="711.5" width="3.4" height="1.6" fill="#f23645"/>
<line x1="375.3" y1="710.0" x2="375.3" y2="713.4" stroke="#089981" stroke-width="1.1"/>
<rect x="373.6" y="710.5" width="3.4" height="2.9" fill="#089981"/>
<line x1="379.6" y1="708.4" x2="379.6" y2="711.6" stroke="#089981" stroke-width="1.1"/>
<rect x="377.9" y="709.9" width="3.4" height="1.1" fill="#089981"/>
<line x1="383.8" y1="709.4" x2="383.8" y2="712.1" stroke="#089981" stroke-width="1.1"/>
<rect x="382.1" y="709.4" width="3.4" height="0.1" fill="#089981"/>
<line x1="388.0" y1="707.1" x2="388.0" y2="711.3" stroke="#089981" stroke-width="1.1"/>
<rect x="386.3" y="709.1" width="3.4" height="0.4" fill="#089981"/>
<line x1="392.3" y1="707.6" x2="392.3" y2="709.3" stroke="#089981" stroke-width="1.1"/>
<rect x="390.6" y="708.1" width="3.4" height="1.2" fill="#089981"/>
<line x1="396.5" y1="705.5" x2="396.5" y2="712.7" stroke="#f23645" stroke-width="1.1"/>
<rect x="394.8" y="708.5" width="3.4" height="0.1" fill="#f23645"/>
<line x1="400.7" y1="703.7" x2="400.7" y2="708.2" stroke="#089981" stroke-width="1.1"/>
<rect x="399.0" y="705.2" width="3.4" height="3.0" fill="#089981"/>
<line x1="404.9" y1="704.2" x2="404.9" y2="709.1" stroke="#f23645" stroke-width="1.1"/>
<rect x="403.2" y="705.2" width="3.4" height="2.9" fill="#f23645"/>
<line x1="409.2" y1="706.0" x2="409.2" y2="710.5" stroke="#089981" stroke-width="1.1"/>
<rect x="407.5" y="707.0" width="3.4" height="1.6" fill="#089981"/>
<line x1="413.4" y1="702.2" x2="413.4" y2="708.4" stroke="#089981" stroke-width="1.1"/>
<rect x="411.7" y="704.2" width="3.4" height="2.7" fill="#089981"/>
<line x1="417.6" y1="704.2" x2="417.6" y2="709.0" stroke="#f23645" stroke-width="1.1"/>
<rect x="415.9" y="704.2" width="3.4" height="4.3" fill="#f23645"/>
<line x1="421.8" y1="707.9" x2="421.8" y2="710.2" stroke="#f23645" stroke-width="1.1"/>
<rect x="420.1" y="707.9" width="3.4" height="1.7" fill="#f23645"/>
<line x1="426.1" y1="708.7" x2="426.1" y2="711.9" stroke="#089981" stroke-width="1.1"/>
<rect x="424.4" y="709.2" width="3.4" height="0.7" fill="#089981"/>
<line x1="430.3" y1="705.2" x2="430.3" y2="711.4" stroke="#089981" stroke-width="1.1"/>
<rect x="428.6" y="708.2" width="3.4" height="1.0" fill="#089981"/>
<line x1="434.5" y1="706.9" x2="434.5" y2="714.8" stroke="#f23645" stroke-width="1.1"/>
<rect x="432.8" y="708.4" width="3.4" height="4.4" fill="#f23645"/>
<line x1="438.7" y1="711.8" x2="438.7" y2="716.8" stroke="#f23645" stroke-width="1.1"/>
<rect x="437.0" y="712.3" width="3.4" height="3.1" fill="#f23645"/>
<line x1="443.0" y1="711.4" x2="443.0" y2="717.6" stroke="#089981" stroke-width="1.1"/>
<rect x="441.3" y="714.4" width="3.4" height="0.7" fill="#089981"/>
<line x1="447.2" y1="712.4" x2="447.2" y2="716.6" stroke="#f23645" stroke-width="1.1"/>
<rect x="445.5" y="714.4" width="3.4" height="0.9" fill="#f23645"/>
<line x1="451.4" y1="712.3" x2="451.4" y2="716.0" stroke="#089981" stroke-width="1.1"/>
<rect x="449.7" y="714.3" width="3.4" height="0.9" fill="#089981"/>
<line x1="455.7" y1="711.9" x2="455.7" y2="717.1" stroke="#f23645" stroke-width="1.1"/>
<rect x="454.0" y="713.9" width="3.4" height="0.8" fill="#f23645"/>
<line x1="459.9" y1="713.0" x2="459.9" y2="717.7" stroke="#089981" stroke-width="1.1"/>
<rect x="458.2" y="714.5" width="3.4" height="0.1" fill="#089981"/>
<line x1="464.1" y1="712.3" x2="464.1" y2="715.0" stroke="#089981" stroke-width="1.1"/>
<rect x="462.4" y="713.8" width="3.4" height="0.1" fill="#089981"/>
<line x1="468.3" y1="711.8" x2="468.3" y2="717.7" stroke="#f23645" stroke-width="1.1"/>
<rect x="466.6" y="713.3" width="3.4" height="2.4" fill="#f23645"/>
<line x1="472.6" y1="714.2" x2="472.6" y2="716.9" stroke="#f23645" stroke-width="1.1"/>
<rect x="470.9" y="715.7" width="3.4" height="1.1" fill="#f23645"/>
<line x1="476.8" y1="714.3" x2="476.8" y2="719.0" stroke="#f23645" stroke-width="1.1"/>
<rect x="475.1" y="716.3" width="3.4" height="0.0" fill="#f23645"/>
<line x1="481.0" y1="713.6" x2="481.0" y2="717.9" stroke="#089981" stroke-width="1.1"/>
<rect x="479.3" y="715.1" width="3.4" height="1.8" fill="#089981"/>
<line x1="485.2" y1="713.4" x2="485.2" y2="717.1" stroke="#089981" stroke-width="1.1"/>
<rect x="483.5" y="714.4" width="3.4" height="0.7" fill="#089981"/>
<line x1="489.5" y1="713.4" x2="489.5" y2="718.5" stroke="#f23645" stroke-width="1.1"/>
<rect x="487.8" y="714.9" width="3.4" height="1.6" fill="#f23645"/>
<line x1="493.7" y1="710.6" x2="493.7" y2="716.1" stroke="#089981" stroke-width="1.1"/>
<rect x="492.0" y="712.6" width="3.4" height="3.5" fill="#089981"/>
<line x1="497.9" y1="712.2" x2="497.9" y2="714.5" stroke="#f23645" stroke-width="1.1"/>
<rect x="496.2" y="712.2" width="3.4" height="2.4" fill="#f23645"/>
<line x1="502.1" y1="707.8" x2="502.1" y2="715.2" stroke="#089981" stroke-width="1.1"/>
<rect x="500.4" y="710.8" width="3.4" height="3.4" fill="#089981"/>
<line x1="506.4" y1="708.6" x2="506.4" y2="713.3" stroke="#f23645" stroke-width="1.1"/>
<rect x="504.7" y="710.6" width="3.4" height="0.2" fill="#f23645"/>
<line x1="510.6" y1="709.4" x2="510.6" y2="713.2" stroke="#089981" stroke-width="1.1"/>
<rect x="508.9" y="709.4" width="3.4" height="1.7" fill="#089981"/>
<line x1="514.8" y1="706.7" x2="514.8" y2="713.5" stroke="#f23645" stroke-width="1.1"/>
<rect x="513.1" y="709.7" width="3.4" height="1.8" fill="#f23645"/>
<line x1="519.1" y1="707.9" x2="519.1" y2="714.1" stroke="#f23645" stroke-width="1.1"/>
<rect x="517.4" y="710.9" width="3.4" height="1.6" fill="#f23645"/>
<line x1="523.3" y1="710.3" x2="523.3" y2="714.0" stroke="#089981" stroke-width="1.1"/>
<rect x="521.6" y="712.3" width="3.4" height="0.4" fill="#089981"/>
<line x1="527.5" y1="711.8" x2="527.5" y2="715.5" stroke="#f23645" stroke-width="1.1"/>
<rect x="525.8" y="712.3" width="3.4" height="0.1" fill="#f23645"/>
<line x1="531.7" y1="707.4" x2="531.7" y2="712.9" stroke="#089981" stroke-width="1.1"/>
<rect x="530.0" y="709.4" width="3.4" height="3.0" fill="#089981"/>
<line x1="536.0" y1="708.4" x2="536.0" y2="711.1" stroke="#089981" stroke-width="1.1"/>
<rect x="534.3" y="709.4" width="3.4" height="0.3" fill="#089981"/>
<line x1="540.2" y1="708.7" x2="540.2" y2="710.9" stroke="#f23645" stroke-width="1.1"/>
<rect x="538.5" y="709.2" width="3.4" height="0.5" fill="#f23645"/>
<line x1="544.4" y1="709.4" x2="544.4" y2="712.2" stroke="#f23645" stroke-width="1.1"/>
<rect x="542.7" y="709.4" width="3.4" height="2.3" fill="#f23645"/>
<line x1="548.6" y1="711.3" x2="548.6" y2="713.5" stroke="#f23645" stroke-width="1.1"/>
<rect x="546.9" y="711.3" width="3.4" height="0.7" fill="#f23645"/>
<line x1="552.9" y1="707.8" x2="552.9" y2="713.8" stroke="#089981" stroke-width="1.1"/>
<rect x="551.2" y="709.3" width="3.4" height="2.6" fill="#089981"/>
<line x1="557.1" y1="693.3" x2="557.1" y2="713.0" stroke="#089981" stroke-width="1.1"/>
<rect x="555.4" y="696.0" width="3.4" height="17.0" fill="#089981"/>
<line x1="561.3" y1="696.0" x2="561.3" y2="710.0" stroke="#f23645" stroke-width="1.1"/>
<rect x="559.6" y="696.3" width="3.4" height="13.3" fill="#f23645"/>
<line x1="565.5" y1="705.9" x2="565.5" y2="708.6" stroke="#089981" stroke-width="1.1"/>
<rect x="563.8" y="706.9" width="3.4" height="1.7" fill="#089981"/>
<line x1="569.8" y1="705.1" x2="569.8" y2="709.3" stroke="#089981" stroke-width="1.1"/>
<rect x="568.1" y="706.1" width="3.4" height="1.0" fill="#089981"/>
<line x1="574.0" y1="706.5" x2="574.0" y2="709.2" stroke="#f23645" stroke-width="1.1"/>
<rect x="572.3" y="706.5" width="3.4" height="0.0" fill="#f23645"/>
<line x1="578.2" y1="699.8" x2="578.2" y2="708.0" stroke="#089981" stroke-width="1.1"/>
<rect x="576.5" y="701.8" width="3.4" height="4.2" fill="#089981"/>
<line x1="582.4" y1="701.3" x2="582.4" y2="703.5" stroke="#f23645" stroke-width="1.1"/>
<rect x="580.7" y="701.8" width="3.4" height="0.8" fill="#f23645"/>
<line x1="586.7" y1="699.9" x2="586.7" y2="703.3" stroke="#089981" stroke-width="1.1"/>
<rect x="585.0" y="700.4" width="3.4" height="2.0" fill="#089981"/>
<line x1="590.9" y1="699.9" x2="590.9" y2="703.3" stroke="#f23645" stroke-width="1.1"/>
<rect x="589.2" y="699.9" width="3.4" height="2.9" fill="#f23645"/>
<line x1="595.1" y1="702.0" x2="595.1" y2="704.2" stroke="#089981" stroke-width="1.1"/>
<rect x="593.4" y="702.0" width="3.4" height="0.7" fill="#089981"/>
<line x1="599.4" y1="697.7" x2="599.4" y2="703.4" stroke="#089981" stroke-width="1.1"/>
<rect x="597.7" y="698.7" width="3.4" height="3.2" fill="#089981"/>
<line x1="603.6" y1="694.1" x2="603.6" y2="701.5" stroke="#089981" stroke-width="1.1"/>
<rect x="601.9" y="697.1" width="3.4" height="1.4" fill="#089981"/>
<line x1="607.8" y1="694.2" x2="607.8" y2="698.4" stroke="#089981" stroke-width="1.1"/>
<rect x="606.1" y="695.7" width="3.4" height="1.1" fill="#089981"/>
<line x1="612.0" y1="695.0" x2="612.0" y2="698.7" stroke="#f23645" stroke-width="1.1"/>
<rect x="610.3" y="695.5" width="3.4" height="0.9" fill="#f23645"/>
<line x1="616.3" y1="695.9" x2="616.3" y2="698.1" stroke="#089981" stroke-width="1.1"/>
<rect x="614.6" y="695.9" width="3.4" height="0.5" fill="#089981"/>
<line x1="620.5" y1="693.2" x2="620.5" y2="702.4" stroke="#f23645" stroke-width="1.1"/>
<rect x="618.8" y="696.2" width="3.4" height="3.2" fill="#f23645"/>
<line x1="624.7" y1="699.0" x2="624.7" y2="702.7" stroke="#f23645" stroke-width="1.1"/>
<rect x="623.0" y="699.5" width="3.4" height="0.4" fill="#f23645"/>
<line x1="628.9" y1="698.7" x2="628.9" y2="701.9" stroke="#f23645" stroke-width="1.1"/>
<rect x="627.2" y="699.7" width="3.4" height="1.1" fill="#f23645"/>
<line x1="633.2" y1="700.6" x2="633.2" y2="706.4" stroke="#f23645" stroke-width="1.1"/>
<rect x="631.5" y="701.1" width="3.4" height="3.7" fill="#f23645"/>
<line x1="637.4" y1="700.9" x2="637.4" y2="707.7" stroke="#089981" stroke-width="1.1"/>
<rect x="635.7" y="702.9" width="3.4" height="1.8" fill="#089981"/>
<line x1="641.6" y1="702.3" x2="641.6" y2="706.8" stroke="#f23645" stroke-width="1.1"/>
<rect x="639.9" y="702.8" width="3.4" height="2.5" fill="#f23645"/>
<line x1="645.8" y1="703.5" x2="645.8" y2="706.7" stroke="#089981" stroke-width="1.1"/>
<rect x="644.1" y="704.5" width="3.4" height="0.4" fill="#089981"/>
<line x1="650.1" y1="702.9" x2="650.1" y2="708.4" stroke="#f23645" stroke-width="1.1"/>
<rect x="648.4" y="703.9" width="3.4" height="1.5" fill="#f23645"/>
<line x1="654.3" y1="703.9" x2="654.3" y2="710.1" stroke="#f23645" stroke-width="1.1"/>
<rect x="652.6" y="704.9" width="3.4" height="2.2" fill="#f23645"/>
<line x1="658.5" y1="702.7" x2="658.5" y2="708.7" stroke="#089981" stroke-width="1.1"/>
<rect x="656.8" y="704.2" width="3.4" height="2.6" fill="#089981"/>
<line x1="662.8" y1="701.5" x2="662.8" y2="706.2" stroke="#089981" stroke-width="1.1"/>
<rect x="661.1" y="703.5" width="3.4" height="0.2" fill="#089981"/>
<line x1="667.0" y1="702.2" x2="667.0" y2="707.3" stroke="#f23645" stroke-width="1.1"/>
<rect x="665.3" y="703.7" width="3.4" height="1.6" fill="#f23645"/>
<line x1="671.2" y1="699.4" x2="671.2" y2="706.0" stroke="#089981" stroke-width="1.1"/>
<rect x="669.5" y="702.4" width="3.4" height="3.0" fill="#089981"/>
<line x1="675.4" y1="702.3" x2="675.4" y2="704.0" stroke="#f23645" stroke-width="1.1"/>
<rect x="673.7" y="702.3" width="3.4" height="1.0" fill="#f23645"/>
<line x1="679.7" y1="701.7" x2="679.7" y2="705.8" stroke="#f23645" stroke-width="1.1"/>
<rect x="678.0" y="702.7" width="3.4" height="2.1" fill="#f23645"/>
<line x1="683.9" y1="697.0" x2="683.9" y2="705.0" stroke="#089981" stroke-width="1.1"/>
<rect x="682.2" y="702.5" width="3.4" height="2.5" fill="#089981"/>
<line x1="688.1" y1="702.9" x2="688.1" y2="707.1" stroke="#089981" stroke-width="1.1"/>
<rect x="686.4" y="702.9" width="3.4" height="0.2" fill="#089981"/>
<line x1="692.3" y1="700.2" x2="692.3" y2="705.4" stroke="#089981" stroke-width="1.1"/>
<rect x="690.6" y="702.2" width="3.4" height="0.8" fill="#089981"/>
<line x1="696.6" y1="701.3" x2="696.6" y2="704.5" stroke="#f23645" stroke-width="1.1"/>
<rect x="694.9" y="702.8" width="3.4" height="0.5" fill="#f23645"/>
<line x1="700.8" y1="702.1" x2="700.8" y2="706.8" stroke="#089981" stroke-width="1.1"/>
<rect x="699.1" y="703.6" width="3.4" height="0.3" fill="#089981"/>
<line x1="705.0" y1="701.6" x2="705.0" y2="707.6" stroke="#f23645" stroke-width="1.1"/>
<rect x="703.3" y="703.1" width="3.4" height="3.1" fill="#f23645"/>
<line x1="709.2" y1="704.4" x2="709.2" y2="707.6" stroke="#089981" stroke-width="1.1"/>
<rect x="707.5" y="705.4" width="3.4" height="0.6" fill="#089981"/>
<line x1="713.5" y1="704.4" x2="713.5" y2="709.0" stroke="#f23645" stroke-width="1.1"/>
<rect x="711.8" y="705.4" width="3.4" height="1.6" fill="#f23645"/>
<line x1="717.7" y1="704.2" x2="717.7" y2="709.9" stroke="#f23645" stroke-width="1.1"/>
<rect x="716.0" y="707.2" width="3.4" height="1.7" fill="#f23645"/>
<line x1="721.9" y1="702.9" x2="721.9" y2="709.2" stroke="#089981" stroke-width="1.1"/>
<rect x="720.2" y="704.9" width="3.4" height="4.3" fill="#089981"/>
<line x1="726.1" y1="697.5" x2="726.1" y2="709.4" stroke="#089981" stroke-width="1.1"/>
<rect x="724.4" y="700.0" width="3.4" height="8.8" fill="#089981"/>
<line x1="730.4" y1="700.4" x2="730.4" y2="706.0" stroke="#089981" stroke-width="1.1"/>
<rect x="728.7" y="701.9" width="3.4" height="4.1" fill="#089981"/>
<line x1="734.6" y1="701.1" x2="734.6" y2="703.3" stroke="#f23645" stroke-width="1.1"/>
<rect x="732.9" y="702.1" width="3.4" height="0.2" fill="#f23645"/>
<line x1="738.8" y1="698.8" x2="738.8" y2="704.5" stroke="#089981" stroke-width="1.1"/>
<rect x="737.1" y="701.8" width="3.4" height="0.2" fill="#089981"/>
<line x1="743.1" y1="698.3" x2="743.1" y2="704.1" stroke="#089981" stroke-width="1.1"/>
<rect x="741.4" y="698.3" width="3.4" height="3.9" fill="#089981"/>
<line x1="747.3" y1="694.0" x2="747.3" y2="703.0" stroke="#089981" stroke-width="1.1"/>
<rect x="745.6" y="694.4" width="3.4" height="8.1" fill="#089981"/>
<line x1="751.5" y1="688.8" x2="751.5" y2="703.0" stroke="#089981" stroke-width="1.1"/>
<rect x="749.8" y="693.8" width="3.4" height="8.8" fill="#089981"/>
<line x1="755.7" y1="692.0" x2="755.7" y2="700.0" stroke="#f23645" stroke-width="1.1"/>
<rect x="754.0" y="693.0" width="3.4" height="6.4" fill="#f23645"/>
<line x1="760.0" y1="692.9" x2="760.0" y2="696.6" stroke="#f23645" stroke-width="1.1"/>
<rect x="758.3" y="694.9" width="3.4" height="0.4" fill="#f23645"/>
<line x1="764.2" y1="691.4" x2="764.2" y2="697.1" stroke="#089981" stroke-width="1.1"/>
<rect x="762.5" y="694.4" width="3.4" height="0.8" fill="#089981"/>
<line x1="768.4" y1="692.2" x2="768.4" y2="698.4" stroke="#f23645" stroke-width="1.1"/>
<rect x="766.7" y="694.2" width="3.4" height="0.8" fill="#f23645"/>
<line x1="772.6" y1="691.7" x2="772.6" y2="695.8" stroke="#089981" stroke-width="1.1"/>
<rect x="770.9" y="693.7" width="3.4" height="1.5" fill="#089981"/>
<line x1="776.9" y1="693.5" x2="776.9" y2="696.9" stroke="#f23645" stroke-width="1.1"/>
<rect x="775.2" y="694.0" width="3.4" height="1.4" fill="#f23645"/>
<line x1="781.1" y1="688.9" x2="781.1" y2="697.9" stroke="#089981" stroke-width="1.1"/>
<rect x="779.4" y="690.9" width="3.4" height="5.0" fill="#089981"/>
<line x1="785.3" y1="688.6" x2="785.3" y2="695.4" stroke="#f23645" stroke-width="1.1"/>
<rect x="783.6" y="690.6" width="3.4" height="1.8" fill="#f23645"/>
<line x1="789.5" y1="689.7" x2="789.5" y2="695.6" stroke="#089981" stroke-width="1.1"/>
<rect x="787.8" y="690.2" width="3.4" height="2.5" fill="#089981"/>
<line x1="793.8" y1="689.4" x2="793.8" y2="693.1" stroke="#f23645" stroke-width="1.1"/>
<rect x="792.1" y="689.9" width="3.4" height="1.0" fill="#f23645"/>
<line x1="798.0" y1="685.1" x2="798.0" y2="691.4" stroke="#089981" stroke-width="1.1"/>
<rect x="796.3" y="688.1" width="3.4" height="3.2" fill="#089981"/>
<line x1="802.2" y1="684.6" x2="802.2" y2="689.0" stroke="#089981" stroke-width="1.1"/>
<rect x="800.5" y="685.6" width="3.4" height="2.0" fill="#089981"/>
<line x1="806.5" y1="682.4" x2="806.5" y2="687.0" stroke="#089981" stroke-width="1.1"/>
<rect x="804.8" y="682.9" width="3.4" height="2.1" fill="#089981"/>
<line x1="810.7" y1="673.8" x2="810.7" y2="688.0" stroke="#089981" stroke-width="1.1"/>
<rect x="809.0" y="678.8" width="3.4" height="8.8" fill="#089981"/>
<line x1="814.9" y1="681.3" x2="814.9" y2="685.0" stroke="#f23645" stroke-width="1.1"/>
<rect x="813.2" y="682.3" width="3.4" height="0.9" fill="#f23645"/>
<line x1="819.1" y1="681.9" x2="819.1" y2="689.4" stroke="#f23645" stroke-width="1.1"/>
<rect x="817.4" y="682.9" width="3.4" height="5.0" fill="#f23645"/>
<line x1="823.4" y1="688.3" x2="823.4" y2="689.5" stroke="#f23645" stroke-width="1.1"/>
<rect x="821.7" y="688.3" width="3.4" height="0.6" fill="#f23645"/>
<line x1="827.6" y1="685.0" x2="827.6" y2="690.8" stroke="#089981" stroke-width="1.1"/>
<rect x="825.9" y="685.5" width="3.4" height="3.8" fill="#089981"/>
<line x1="831.8" y1="682.9" x2="831.8" y2="686.2" stroke="#089981" stroke-width="1.1"/>
<rect x="830.1" y="683.4" width="3.4" height="1.8" fill="#089981"/>
<line x1="836.0" y1="678.8" x2="836.0" y2="684.8" stroke="#089981" stroke-width="1.1"/>
<rect x="834.3" y="680.8" width="3.4" height="3.0" fill="#089981"/>
<line x1="840.3" y1="679.6" x2="840.3" y2="682.8" stroke="#089981" stroke-width="1.1"/>
<rect x="838.6" y="680.1" width="3.4" height="1.0" fill="#089981"/>
<line x1="844.5" y1="678.7" x2="844.5" y2="683.2" stroke="#f23645" stroke-width="1.1"/>
<rect x="842.8" y="680.2" width="3.4" height="2.0" fill="#f23645"/>
<line x1="848.7" y1="678.4" x2="848.7" y2="683.7" stroke="#089981" stroke-width="1.1"/>
<rect x="847.0" y="680.4" width="3.4" height="1.3" fill="#089981"/>
<line x1="852.9" y1="679.7" x2="852.9" y2="683.9" stroke="#f23645" stroke-width="1.1"/>
<rect x="851.2" y="680.7" width="3.4" height="3.3" fill="#f23645"/>
<line x1="857.2" y1="682.5" x2="857.2" y2="691.0" stroke="#089981" stroke-width="1.1"/>
<rect x="855.5" y="683.0" width="3.4" height="5.0" fill="#089981"/>
<line x1="861.4" y1="677.9" x2="861.4" y2="685.1" stroke="#f23645" stroke-width="1.1"/>
<rect x="859.7" y="680.9" width="3.4" height="1.2" fill="#f23645"/>
<line x1="865.6" y1="682.1" x2="865.6" y2="685.2" stroke="#f23645" stroke-width="1.1"/>
<rect x="863.9" y="682.6" width="3.4" height="1.6" fill="#f23645"/>
<line x1="869.9" y1="684.0" x2="869.9" y2="686.2" stroke="#f23645" stroke-width="1.1"/>
<rect x="868.2" y="684.0" width="3.4" height="1.3" fill="#f23645"/>
<line x1="874.1" y1="681.9" x2="874.1" y2="687.1" stroke="#089981" stroke-width="1.1"/>
<rect x="872.4" y="684.9" width="3.4" height="0.4" fill="#089981"/>
<line x1="878.3" y1="681.9" x2="878.3" y2="686.8" stroke="#089981" stroke-width="1.1"/>
<rect x="876.6" y="682.9" width="3.4" height="2.4" fill="#089981"/>
<line x1="882.5" y1="679.7" x2="882.5" y2="688.5" stroke="#f23645" stroke-width="1.1"/>
<rect x="880.8" y="682.7" width="3.4" height="3.8" fill="#f23645"/>
<line x1="886.8" y1="685.3" x2="886.8" y2="688.7" stroke="#f23645" stroke-width="1.1"/>
<rect x="885.1" y="686.3" width="3.4" height="2.4" fill="#f23645"/>
<line x1="891.0" y1="687.1" x2="891.0" y2="690.3" stroke="#f23645" stroke-width="1.1"/>
<rect x="889.3" y="688.6" width="3.4" height="0.8" fill="#f23645"/>
<line x1="895.2" y1="687.7" x2="895.2" y2="693.1" stroke="#f23645" stroke-width="1.1"/>
<rect x="893.5" y="689.2" width="3.4" height="1.8" fill="#f23645"/>
<line x1="899.4" y1="688.0" x2="899.4" y2="691.7" stroke="#089981" stroke-width="1.1"/>
<rect x="897.7" y="688.5" width="3.4" height="2.7" fill="#089981"/>
<line x1="903.7" y1="685.6" x2="903.7" y2="688.4" stroke="#089981" stroke-width="1.1"/>
<rect x="902.0" y="686.6" width="3.4" height="1.8" fill="#089981"/>
<line x1="907.9" y1="685.5" x2="907.9" y2="689.2" stroke="#089981" stroke-width="1.1"/>
<rect x="906.2" y="686.0" width="3.4" height="0.1" fill="#089981"/>
<line x1="912.1" y1="683.9" x2="912.1" y2="687.1" stroke="#f23645" stroke-width="1.1"/>
<rect x="910.4" y="685.4" width="3.4" height="1.8" fill="#f23645"/>
<line x1="916.3" y1="684.9" x2="916.3" y2="690.0" stroke="#f23645" stroke-width="1.1"/>
<rect x="914.6" y="686.9" width="3.4" height="3.1" fill="#f23645"/>
<line x1="920.6" y1="689.7" x2="920.6" y2="691.9" stroke="#f23645" stroke-width="1.1"/>
<rect x="918.9" y="689.7" width="3.4" height="0.9" fill="#f23645"/>
<line x1="924.8" y1="692.0" x2="924.8" y2="700.6" stroke="#f23645" stroke-width="1.1"/>
<rect x="923.1" y="693.0" width="3.4" height="2.6" fill="#f23645"/>
<line x1="929.0" y1="694.4" x2="929.0" y2="702.5" stroke="#089981" stroke-width="1.1"/>
<rect x="927.3" y="697.0" width="3.4" height="3.0" fill="#089981"/>
<line x1="933.2" y1="691.0" x2="933.2" y2="696.4" stroke="#089981" stroke-width="1.1"/>
<rect x="931.5" y="693.0" width="3.4" height="2.4" fill="#089981"/>
<line x1="937.5" y1="692.0" x2="937.5" y2="706.9" stroke="#f23645" stroke-width="1.1"/>
<rect x="935.8" y="693.0" width="3.4" height="8.2" fill="#f23645"/>
<line x1="941.7" y1="696.3" x2="941.7" y2="702.5" stroke="#f23645" stroke-width="1.1"/>
<rect x="940.0" y="698.3" width="3.4" height="0.7" fill="#f23645"/>
<line x1="945.9" y1="697.0" x2="945.9" y2="700.6" stroke="#089981" stroke-width="1.1"/>
<rect x="944.2" y="697.0" width="3.4" height="2.0" fill="#089981"/>
<line x1="950.2" y1="696.6" x2="950.2" y2="699.6" stroke="#f23645" stroke-width="1.1"/>
<rect x="948.5" y="697.6" width="3.4" height="2.0" fill="#f23645"/>
<line x1="954.4" y1="697.9" x2="954.4" y2="702.6" stroke="#089981" stroke-width="1.1"/>
<rect x="952.7" y="699.4" width="3.4" height="0.6" fill="#089981"/>
<line x1="958.6" y1="696.4" x2="958.6" y2="700.6" stroke="#f23645" stroke-width="1.1"/>
<rect x="956.9" y="699.4" width="3.4" height="0.6" fill="#f23645"/>
<line x1="962.8" y1="694.0" x2="962.8" y2="704.0" stroke="#089981" stroke-width="1.1"/>
<rect x="961.1" y="694.7" width="3.4" height="8.1" fill="#089981"/>
<line x1="967.1" y1="689.0" x2="967.1" y2="695.0" stroke="#089981" stroke-width="1.1"/>
<rect x="965.4" y="689.6" width="3.4" height="5.1" fill="#089981"/>
<line x1="971.3" y1="685.0" x2="971.3" y2="695.4" stroke="#089981" stroke-width="1.1"/>
<rect x="969.6" y="689.0" width="3.4" height="5.0" fill="#089981"/>
<line x1="975.5" y1="690.0" x2="975.5" y2="695.0" stroke="#f23645" stroke-width="1.1"/>
<rect x="973.8" y="690.3" width="3.4" height="2.2" fill="#f23645"/>
<line x1="979.7" y1="661.6" x2="979.7" y2="691.0" stroke="#089981" stroke-width="1.1"/>
<rect x="978.0" y="669.7" width="3.4" height="21.3" fill="#089981"/>
<line x1="984.0" y1="642.1" x2="984.0" y2="681.0" stroke="#f23645" stroke-width="1.1"/>
<rect x="982.3" y="669.7" width="3.4" height="10.3" fill="#f23645"/>
<line x1="988.2" y1="672.3" x2="988.2" y2="679.0" stroke="#089981" stroke-width="1.1"/>
<rect x="986.5" y="674.0" width="3.4" height="4.9" fill="#089981"/>
<line x1="992.4" y1="675.0" x2="992.4" y2="687.7" stroke="#f23645" stroke-width="1.1"/>
<rect x="990.7" y="675.6" width="3.4" height="7.4" fill="#f23645"/>
<line x1="996.6" y1="674.5" x2="996.6" y2="680.5" stroke="#f23645" stroke-width="1.1"/>
<rect x="994.9" y="676.5" width="3.4" height="2.0" fill="#f23645"/>
<line x1="1000.9" y1="677.1" x2="1000.9" y2="681.4" stroke="#f23645" stroke-width="1.1"/>
<rect x="999.2" y="678.1" width="3.4" height="1.8" fill="#f23645"/>
<line x1="1005.1" y1="679.1" x2="1005.1" y2="684.3" stroke="#089981" stroke-width="1.1"/>
<rect x="1003.4" y="680.1" width="3.4" height="0.1" fill="#089981"/>
<line x1="1009.3" y1="678.9" x2="1009.3" y2="683.1" stroke="#f23645" stroke-width="1.1"/>
<rect x="1007.6" y="680.4" width="3.4" height="1.7" fill="#f23645"/>
<line x1="1013.6" y1="680.6" x2="1013.6" y2="685.8" stroke="#089981" stroke-width="1.1"/>
<rect x="1011.9" y="681.6" width="3.4" height="0.4" fill="#089981"/>
<line x1="1017.8" y1="679.9" x2="1017.8" y2="683.1" stroke="#089981" stroke-width="1.1"/>
<rect x="1016.1" y="681.4" width="3.4" height="0.7" fill="#089981"/>
<line x1="1022.0" y1="680.1" x2="1022.0" y2="683.3" stroke="#089981" stroke-width="1.1"/>
<rect x="1020.3" y="680.6" width="3.4" height="0.5" fill="#089981"/>
<line x1="1026.2" y1="679.9" x2="1026.2" y2="683.1" stroke="#f23645" stroke-width="1.1"/>
<rect x="1024.5" y="680.9" width="3.4" height="2.2" fill="#f23645"/>
<line x1="1030.5" y1="681.7" x2="1030.5" y2="684.4" stroke="#089981" stroke-width="1.1"/>
<rect x="1028.8" y="681.7" width="3.4" height="1.1" fill="#089981"/>
<line x1="1034.7" y1="681.1" x2="1034.7" y2="685.8" stroke="#f23645" stroke-width="1.1"/>
<rect x="1033.0" y="681.6" width="3.4" height="1.1" fill="#f23645"/>
<line x1="1038.9" y1="679.5" x2="1038.9" y2="683.7" stroke="#089981" stroke-width="1.1"/>
<rect x="1037.2" y="681.0" width="3.4" height="2.2" fill="#089981"/>
<line x1="1043.1" y1="678.6" x2="1043.1" y2="683.5" stroke="#f23645" stroke-width="1.1"/>
<rect x="1041.4" y="680.6" width="3.4" height="2.4" fill="#f23645"/>
<line x1="1047.4" y1="682.6" x2="1047.4" y2="686.8" stroke="#f23645" stroke-width="1.1"/>
<rect x="1045.7" y="683.6" width="3.4" height="0.9" fill="#f23645"/>
<line x1="1051.6" y1="683.6" x2="1051.6" y2="688.4" stroke="#f23645" stroke-width="1.1"/>
<rect x="1049.9" y="684.1" width="3.4" height="4.3" fill="#f23645"/>
<line x1="1055.8" y1="688.4" x2="1055.8" y2="692.7" stroke="#f23645" stroke-width="1.1"/>
<rect x="1054.1" y="688.9" width="3.4" height="3.3" fill="#f23645"/>
<line x1="1060.0" y1="688.9" x2="1060.0" y2="696.0" stroke="#f23645" stroke-width="1.1"/>
<rect x="1058.3" y="691.9" width="3.4" height="2.2" fill="#f23645"/>
<line x1="1064.3" y1="692.5" x2="1064.3" y2="695.5" stroke="#f23645" stroke-width="1.1"/>
<rect x="1062.6" y="694.0" width="3.4" height="1.5" fill="#f23645"/>
<line x1="1068.5" y1="693.6" x2="1068.5" y2="700.8" stroke="#f23645" stroke-width="1.1"/>
<rect x="1066.8" y="695.6" width="3.4" height="4.2" fill="#f23645"/>
<line x1="1072.7" y1="696.5" x2="1072.7" y2="702.4" stroke="#089981" stroke-width="1.1"/>
<rect x="1071.0" y="697.0" width="3.4" height="2.5" fill="#089981"/>
<line x1="1076.9" y1="696.9" x2="1076.9" y2="698.6" stroke="#f23645" stroke-width="1.1"/>
<rect x="1075.2" y="697.4" width="3.4" height="0.6" fill="#f23645"/>
<line x1="1081.2" y1="697.5" x2="1081.2" y2="700.6" stroke="#f23645" stroke-width="1.1"/>
<rect x="1079.5" y="698.0" width="3.4" height="1.5" fill="#f23645"/>
<line x1="1085.4" y1="696.2" x2="1085.4" y2="700.5" stroke="#089981" stroke-width="1.1"/>
<rect x="1083.7" y="698.2" width="3.4" height="1.3" fill="#089981"/>
<line x1="1089.6" y1="698.4" x2="1089.6" y2="702.2" stroke="#f23645" stroke-width="1.1"/>
<rect x="1087.9" y="698.4" width="3.4" height="2.8" fill="#f23645"/>
<line x1="1093.9" y1="694.1" x2="1093.9" y2="702.3" stroke="#089981" stroke-width="1.1"/>
<rect x="1092.2" y="697.1" width="3.4" height="3.6" fill="#089981"/>
<line x1="1098.1" y1="697.4" x2="1098.1" y2="703.1" stroke="#f23645" stroke-width="1.1"/>
<rect x="1096.4" y="697.4" width="3.4" height="2.7" fill="#f23645"/>
<line x1="1102.3" y1="696.6" x2="1102.3" y2="703.8" stroke="#089981" stroke-width="1.1"/>
<rect x="1100.6" y="699.6" width="3.4" height="1.0" fill="#089981"/>
<line x1="1106.5" y1="698.8" x2="1106.5" y2="701.5" stroke="#089981" stroke-width="1.1"/>
<rect x="1104.8" y="698.8" width="3.4" height="0.5" fill="#089981"/>
<line x1="1110.8" y1="693.0" x2="1110.8" y2="701.0" stroke="#089981" stroke-width="1.1"/>
<rect x="1109.1" y="693.8" width="3.4" height="6.2" fill="#089981"/>
<line x1="1115.0" y1="678.0" x2="1115.0" y2="694.0" stroke="#089981" stroke-width="1.1"/>
<rect x="1113.3" y="683.8" width="3.4" height="9.2" fill="#089981"/>
<line x1="1119.2" y1="686.3" x2="1119.2" y2="691.1" stroke="#089981" stroke-width="1.1"/>
<rect x="1117.5" y="687.3" width="3.4" height="2.3" fill="#089981"/>
<line x1="1123.4" y1="684.7" x2="1123.4" y2="687.3" stroke="#089981" stroke-width="1.1"/>
<rect x="1121.7" y="685.2" width="3.4" height="1.6" fill="#089981"/>
<line x1="1127.7" y1="677.0" x2="1127.7" y2="687.5" stroke="#f23645" stroke-width="1.1"/>
<rect x="1126.0" y="681.0" width="3.4" height="3.0" fill="#f23645"/>
<line x1="1131.9" y1="683.7" x2="1131.9" y2="687.4" stroke="#f23645" stroke-width="1.1"/>
<rect x="1130.2" y="684.7" width="3.4" height="0.6" fill="#f23645"/>
<line x1="1136.1" y1="684.3" x2="1136.1" y2="688.4" stroke="#f23645" stroke-width="1.1"/>
<rect x="1134.4" y="684.8" width="3.4" height="1.7" fill="#f23645"/>
<line x1="1140.3" y1="680.2" x2="1140.3" y2="687.2" stroke="#089981" stroke-width="1.1"/>
<rect x="1138.6" y="683.2" width="3.4" height="3.4" fill="#089981"/>
<line x1="1144.6" y1="681.6" x2="1144.6" y2="686.3" stroke="#f23645" stroke-width="1.1"/>
<rect x="1142.9" y="683.1" width="3.4" height="0.5" fill="#f23645"/>
<line x1="1148.8" y1="683.1" x2="1148.8" y2="686.4" stroke="#f23645" stroke-width="1.1"/>
<rect x="1147.1" y="683.1" width="3.4" height="2.8" fill="#f23645"/>
<line x1="1153.0" y1="685.8" x2="1153.0" y2="688.1" stroke="#f23645" stroke-width="1.1"/>
<rect x="1151.3" y="685.8" width="3.4" height="1.3" fill="#f23645"/>
<line x1="1157.3" y1="684.9" x2="1157.3" y2="688.6" stroke="#089981" stroke-width="1.1"/>
<rect x="1155.6" y="686.9" width="3.4" height="0.2" fill="#089981"/>
<line x1="1161.5" y1="682.6" x2="1161.5" y2="688.7" stroke="#089981" stroke-width="1.1"/>
<rect x="1159.8" y="685.6" width="3.4" height="1.5" fill="#089981"/>
<line x1="1165.7" y1="682.9" x2="1165.7" y2="686.2" stroke="#089981" stroke-width="1.1"/>
<rect x="1164.0" y="684.9" width="3.4" height="1.2" fill="#089981"/>
<line x1="1169.9" y1="684.1" x2="1169.9" y2="686.8" stroke="#f23645" stroke-width="1.1"/>
<rect x="1168.2" y="685.1" width="3.4" height="0.9" fill="#f23645"/>
<line x1="1174.2" y1="685.7" x2="1174.2" y2="687.9" stroke="#089981" stroke-width="1.1"/>
<rect x="1172.5" y="685.7" width="3.4" height="0.4" fill="#089981"/>
<line x1="1178.4" y1="681.3" x2="1178.4" y2="687.0" stroke="#089981" stroke-width="1.1"/>
<rect x="1176.7" y="684.3" width="3.4" height="1.3" fill="#089981"/>
<line x1="1182.6" y1="681.3" x2="1182.6" y2="685.5" stroke="#089981" stroke-width="1.1"/>
<rect x="1180.9" y="683.3" width="3.4" height="0.8" fill="#089981"/>
<line x1="1186.8" y1="681.7" x2="1186.8" y2="689.3" stroke="#f23645" stroke-width="1.1"/>
<rect x="1185.1" y="683.7" width="3.4" height="2.6" fill="#f23645"/>
<line x1="1191.1" y1="682.5" x2="1191.1" y2="688.6" stroke="#089981" stroke-width="1.1"/>
<rect x="1189.4" y="683.5" width="3.4" height="3.1" fill="#089981"/>
<line x1="1195.3" y1="681.6" x2="1195.3" y2="685.3" stroke="#f23645" stroke-width="1.1"/>
<rect x="1193.6" y="683.6" width="3.4" height="0.2" fill="#f23645"/>
<line x1="1199.5" y1="681.5" x2="1199.5" y2="688.3" stroke="#f23645" stroke-width="1.1"/>
<rect x="1197.8" y="683.5" width="3.4" height="1.9" fill="#f23645"/>
<line x1="1203.7" y1="683.8" x2="1203.7" y2="687.0" stroke="#f23645" stroke-width="1.1"/>
<rect x="1202.0" y="685.8" width="3.4" height="0.1" fill="#f23645"/>
<line x1="1208.0" y1="685.5" x2="1208.0" y2="687.2" stroke="#f23645" stroke-width="1.1"/>
<rect x="1206.3" y="685.5" width="3.4" height="0.0" fill="#f23645"/>
<line x1="1212.2" y1="680.9" x2="1212.2" y2="686.7" stroke="#089981" stroke-width="1.1"/>
<rect x="1210.5" y="683.9" width="3.4" height="1.8" fill="#089981"/>
<line x1="1216.4" y1="683.2" x2="1216.4" y2="686.4" stroke="#089981" stroke-width="1.1"/>
<rect x="1214.7" y="684.2" width="3.4" height="0.1" fill="#089981"/>
<line x1="1220.6" y1="680.8" x2="1220.6" y2="685.5" stroke="#f23645" stroke-width="1.1"/>
<rect x="1218.9" y="683.8" width="3.4" height="1.0" fill="#f23645"/>
<line x1="1224.9" y1="681.8" x2="1224.9" y2="687.0" stroke="#089981" stroke-width="1.1"/>
<rect x="1223.2" y="683.8" width="3.4" height="1.1" fill="#089981"/>
<line x1="1229.1" y1="682.6" x2="1229.1" y2="687.3" stroke="#089981" stroke-width="1.1"/>
<rect x="1227.4" y="683.1" width="3.4" height="1.3" fill="#089981"/>
<line x1="1233.3" y1="681.5" x2="1233.3" y2="687.7" stroke="#f23645" stroke-width="1.1"/>
<rect x="1231.6" y="683.5" width="3.4" height="3.7" fill="#f23645"/>
<line x1="1237.6" y1="683.6" x2="1237.6" y2="690.6" stroke="#089981" stroke-width="1.1"/>
<rect x="1235.9" y="684.6" width="3.4" height="2.9" fill="#089981"/>
<line x1="1241.8" y1="682.0" x2="1241.8" y2="693.0" stroke="#f23645" stroke-width="1.1"/>
<rect x="1240.1" y="683.0" width="3.4" height="9.0" fill="#f23645"/>
<line x1="1246.0" y1="683.0" x2="1246.0" y2="692.0" stroke="#089981" stroke-width="1.1"/>
<rect x="1244.3" y="684.0" width="3.4" height="7.0" fill="#089981"/>
<line x1="1250.2" y1="683.0" x2="1250.2" y2="688.8" stroke="#089981" stroke-width="1.1"/>
<rect x="1248.5" y="686.0" width="3.4" height="2.3" fill="#089981"/>
<line x1="1254.5" y1="681.6" x2="1254.5" y2="687.7" stroke="#089981" stroke-width="1.1"/>
<rect x="1252.8" y="684.6" width="3.4" height="1.6" fill="#089981"/>
<line x1="1258.7" y1="684.7" x2="1258.7" y2="686.4" stroke="#f23645" stroke-width="1.1"/>
<rect x="1257.0" y="684.7" width="3.4" height="0.4" fill="#f23645"/>
<line x1="1262.9" y1="682.2" x2="1262.9" y2="687.1" stroke="#089981" stroke-width="1.1"/>
<rect x="1261.2" y="682.7" width="3.4" height="2.4" fill="#089981"/>
<line x1="1263.0" y1="680.0" x2="1263.0" y2="690.0" stroke="#089981" stroke-width="1.2"/>
<rect x="1261.1" y="682.0" width="3.8" height="4.0" fill="#089981"/>
<line x1="1267.2" y1="557.0" x2="1267.2" y2="684.0" stroke="#089981" stroke-width="1.2"/>
<rect x="1265.3" y="599.0" width="3.8" height="83.0" fill="#089981"/>
<line x1="1271.4" y1="569.0" x2="1271.4" y2="664.0" stroke="#089981" stroke-width="1.2"/>
<rect x="1269.5" y="590.0" width="3.8" height="9.0" fill="#089981"/>
<line x1="1275.6" y1="516.4" x2="1275.6" y2="609.0" stroke="#089981" stroke-width="1.2"/>
<rect x="1273.7" y="545.7" width="3.8" height="44.3" fill="#089981"/>
<line x1="1279.9" y1="379.0" x2="1279.9" y2="555.0" stroke="#089981" stroke-width="1.2"/>
<rect x="1278.0" y="412.0" width="3.8" height="136.7" fill="#089981"/>
<line x1="1284.1" y1="391.8" x2="1284.1" y2="470.0" stroke="#f23645" stroke-width="1.2"/>
<rect x="1282.2" y="412.0" width="3.8" height="35.8" fill="#f23645"/>
<line x1="1288.3" y1="373.5" x2="1288.3" y2="455.0" stroke="#089981" stroke-width="1.2"/>
<rect x="1286.4" y="409.3" width="3.8" height="37.6" fill="#089981"/>
<line x1="1292.6" y1="164.0" x2="1292.6" y2="415.0" stroke="#089981" stroke-width="1.2"/>
<rect x="1290.7" y="176.0" width="3.8" height="234.0" fill="#089981"/>
<line x1="1296.8" y1="128.4" x2="1296.8" y2="267.0" stroke="#f23645" stroke-width="1.2"/>
<rect x="1294.9" y="176.0" width="3.8" height="49.0" fill="#f23645"/>
</g>
<line x1="14" y1="225.3" x2="1467" y2="225.3" stroke="#f23645" stroke-width="1.8" stroke-dasharray="1.8 2.5"/>
<rect x="1468.5" y="213.6" width="103.3" height="63.3" rx="2" fill="#f23645"/>
<text x="1479.5" y="230.2" fill="#ffffff" stroke="#ffffff" stroke-width="0.35" font-size="16.3" textLength="84" lengthAdjust="spacingAndGlyphs">0.0056131</text>
<text x="1479.5" y="250.0" fill="#fbd0d4" stroke="#fbd0d4" stroke-width="0.35" font-size="16.3" textLength="66" lengthAdjust="spacingAndGlyphs">02:13:51</text>
<text x="1479.5" y="271.0" fill="#ffffff" stroke="#ffffff" stroke-width="0.35" font-size="16.3" textLength="84" lengthAdjust="spacingAndGlyphs">0.0052381</text>
<rect x="1468.5" y="513.1" width="103.3" height="22.8" rx="2" fill="#ff0000"/>
<text x="1479.5" y="530.3" fill="#ffffff" stroke="#ffffff" stroke-width="0.35" font-size="16.3" textLength="84" lengthAdjust="spacingAndGlyphs">0.0028554</text>
<rect x="1468.5" y="569" width="103.3" height="22.8" rx="2" fill="#2962ff"/>
<text x="1479.5" y="586.2" fill="#ffffff" stroke="#ffffff" stroke-width="0.35" font-size="16.3" textLength="84" lengthAdjust="spacingAndGlyphs">0.0023349</text>
<rect x="1468.5" y="600.3" width="103.3" height="22.4" rx="2" fill="#ff8c00"/>
<text x="1479.5" y="617.3" fill="#ffffff" stroke="#ffffff" stroke-width="0.35" font-size="16.3" textLength="84" lengthAdjust="spacingAndGlyphs">0.0020555</text>
<rect x="1468.5" y="636.9" width="103.3" height="22.8" rx="2" fill="#00ffff"/>
<text x="1479.5" y="654.1" fill="#131313" stroke="#131313" stroke-width="0.35" font-size="16.3" textLength="84" lengthAdjust="spacingAndGlyphs">0.0017100</text>
<rect x="1468.5" y="659.7" width="103.3" height="22.7" rx="2" fill="#0000ff"/>
<text x="1479.5" y="676.8" fill="#ffffff" stroke="#ffffff" stroke-width="0.35" font-size="16.3" textLength="84" lengthAdjust="spacingAndGlyphs">0.0015075</text>
<rect x="1468.5" y="885" width="112.9" height="22.7" rx="2" fill="#089981"/>
<text x="1479.5" y="902.2" fill="#ffffff" stroke="#ffffff" stroke-width="0.35" font-size="16.3" textLength="93.7" lengthAdjust="spacingAndGlyphs">−0.0005683</text>
<g>
<rect x="1439" y="938" width="5" height="37" fill="#101010"/>
<circle cx="1428" cy="955" r="13.4" fill="#0a0a0a" stroke="#0a0a0a" stroke-width="6"/>
<circle cx="1428" cy="955" r="13.4" fill="none" stroke="#f23645" stroke-width="2.6"/>
<clipPath id="fl"><circle cx="1428" cy="955" r="10.7"/></clipPath>
<g clip-path="url(#fl)">
<rect x="1416" y="943" width="24" height="24" fill="#f0484f"/>
<rect x="1416" y="948.6" width="24" height="4.4" fill="#ffffff"/>
<rect x="1416" y="957" width="24" height="4" fill="#ffffff"/>
<rect x="1416" y="943" width="14.4" height="14" fill="#1f78e6"/>
<circle cx="1423.7" cy="947" r="0.9" fill="#fff"/>
<circle cx="1427.2" cy="947" r="0.9" fill="#fff"/>
<circle cx="1420.2" cy="950.7" r="0.9" fill="#fff"/>
<circle cx="1423.7" cy="950.7" r="0.9" fill="#fff"/>
<circle cx="1427.2" cy="950.7" r="0.9" fill="#fff"/>
<circle cx="1420.2" cy="954.3" r="0.9" fill="#fff"/>
<circle cx="1423.7" cy="954.3" r="0.9" fill="#fff"/>
<circle cx="1427.2" cy="954.3" r="0.9" fill="#fff"/>
</g></g>
<g fill="#e0e0e0">
<path d="M15.9 1039 H32 V1058.5 H23.7 V1047.2 H15.9 Z"/>
<circle cx="38.4" cy="1042.9" r="4"/>
<path d="M47.2 1039 H55.8 L47.7 1058.5 H38.9 Z"/>
</g>
<text x="64.8" y="1058.7" fill="#e0e0e0" stroke="#e0e0e0" stroke-width="0.35" font-size="27.5" textLength="160.4" lengthAdjust="spacingAndGlyphs" font-weight="bold">Tr&#x251;ding&#x56;iew</text>
</svg></body></html>
